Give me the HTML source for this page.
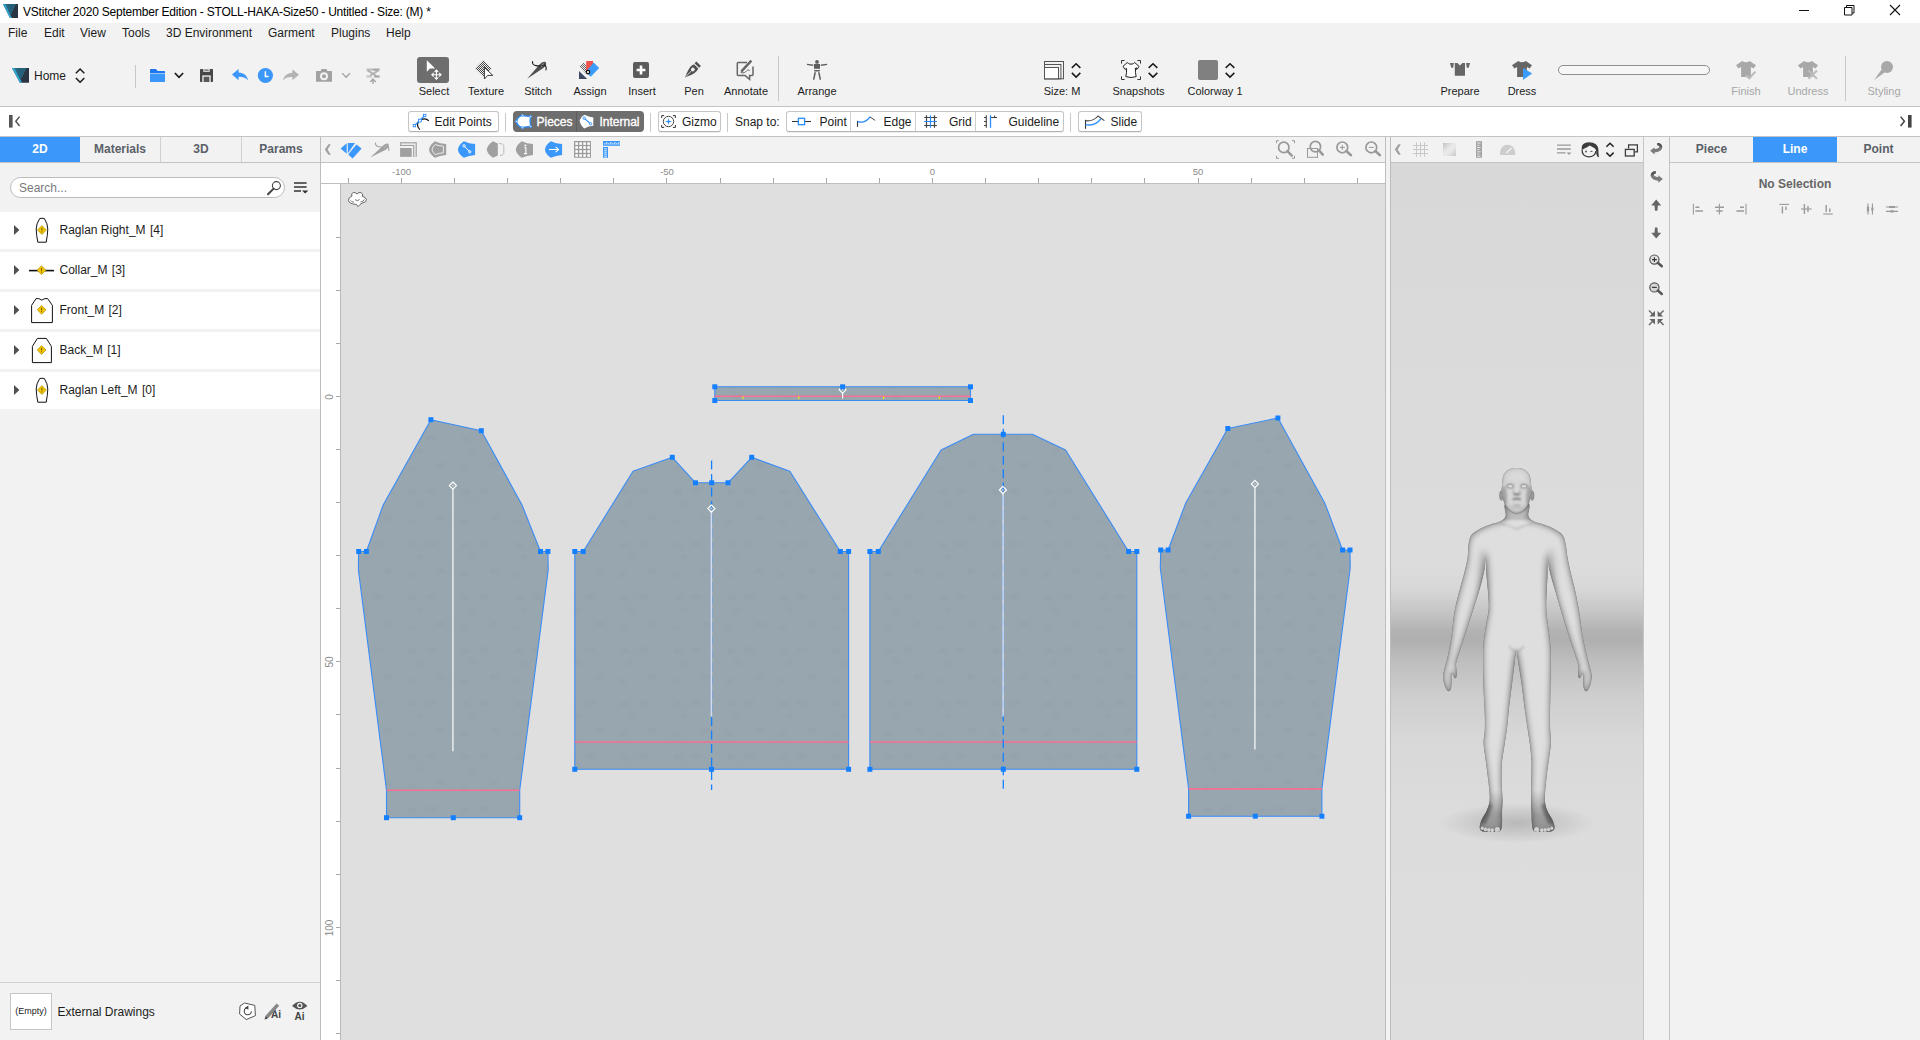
<!DOCTYPE html><html><head><meta charset="utf-8"><title>VStitcher 2020 September Edition</title><style>
html,body{margin:0;padding:0}
body{width:1920px;height:1040px;position:relative;overflow:hidden;background:#f2f2f2;font-family:"Liberation Sans",sans-serif;font-size:12px;color:#1c1c1c}
.a{position:absolute}
.t{position:absolute;white-space:nowrap;line-height:14px}
.c{transform:translateX(-50%)}
.lbl{font-size:11px;line-height:13px}
.dis{color:#a6a6a6}
.tab{position:absolute;top:137px;height:25px;line-height:24px;text-align:center;font-weight:bold;color:#5a6068;font-size:12px;box-sizing:border-box}
.tab.on{background:#3b97f9;color:#fff}
.btn{position:absolute;box-sizing:border-box;border:1px solid #c6c6c6;border-bottom-color:#b4b4b4;border-radius:3px;background:#fff;box-shadow:0 1px 1px rgba(0,0,0,0.08)}
.row{position:absolute;left:0;width:320px;height:37px;background:#fff}
svg{position:absolute;overflow:visible}
</style></head><body>
<div class="a" style="left:0px;top:0px;width:1920px;height:23px;background:#fff;"></div>
<div class="t " style="left:23px;top:5px;color:#000;font-size:12px;letter-spacing:-0.22px">VStitcher 2020 September Edition - STOLL-HAKA-Size50 - Untitled - Size: (M) *</div>
<div class="t " style="left:8px;top:26px;">File</div>
<div class="t " style="left:44px;top:26px;">Edit</div>
<div class="t " style="left:80px;top:26px;">View</div>
<div class="t " style="left:122px;top:26px;">Tools</div>
<div class="t " style="left:166px;top:26px;">3D Environment</div>
<div class="t " style="left:268px;top:26px;">Garment</div>
<div class="t " style="left:331px;top:26px;">Plugins</div>
<div class="t " style="left:386px;top:26px;">Help</div>
<div class="a" style="left:0px;top:106px;width:1920px;height:1px;background:#c4c4c4;"></div>
<div class="a" style="left:0px;top:107px;width:1920px;height:29px;background:#fff;"></div>
<div class="a" style="left:0px;top:136px;width:1920px;height:1px;background:#c4c4c4;"></div>
<div class="a" style="left:0px;top:162px;width:1385px;height:1px;background:#c3c3c3;"></div>
<div class="a" style="left:1391px;top:162px;width:253px;height:1px;background:#c3c3c3;"></div>
<div class="a" style="left:1670px;top:162px;width:250px;height:1px;background:#c3c3c3;"></div>
<div class="t " style="left:34px;top:69px;font-size:12px">Home</div>
<div class="a" style="left:135px;top:65px;width:1px;height:23px;background:#c8c8c8;"></div>
<div class="a" style="left:778px;top:56px;width:1px;height:45px;background:#c8c8c8;"></div>
<div class="a" style="left:1845px;top:56px;width:1px;height:45px;background:#c8c8c8;"></div>
<div class="a" style="left:417px;top:57px;width:32px;height:26px;background:#6e6e6e;border-radius:3px"></div>
<div class="t c lbl" style="left:434px;top:85px;">Select</div>
<div class="t c lbl" style="left:486px;top:85px;">Texture</div>
<div class="t c lbl" style="left:538px;top:85px;">Stitch</div>
<div class="t c lbl" style="left:590px;top:85px;">Assign</div>
<div class="t c lbl" style="left:642px;top:85px;">Insert</div>
<div class="t c lbl" style="left:694px;top:85px;">Pen</div>
<div class="t c lbl" style="left:746px;top:85px;">Annotate</div>
<div class="t c lbl" style="left:817px;top:85px;">Arrange</div>
<div class="t c lbl" style="left:1062px;top:85px;">Size: M</div>
<div class="t c lbl" style="left:1138.5px;top:85px;">Snapshots</div>
<div class="t c lbl" style="left:1215px;top:85px;">Colorway 1</div>
<div class="t c lbl" style="left:1460px;top:85px;">Prepare</div>
<div class="t c lbl" style="left:1522px;top:85px;">Dress</div>
<div class="t c lbl dis" style="left:1746px;top:85px;">Finish</div>
<div class="t c lbl dis" style="left:1808px;top:85px;">Undress</div>
<div class="t c lbl dis" style="left:1884px;top:85px;">Styling</div>
<div class="a" style="left:1198px;top:60px;width:20px;height:20px;background:#808080;border-radius:2px"></div>
<div class="a" style="left:1558px;top:65px;width:150px;height:8px;border:1px solid #8e8e8e;border-radius:5px;background:#f6f6f6"></div>
<div class="btn" style="left:408px;top:111px;width:91px;height:21px"></div>
<div class="t " style="left:434.5px;top:115px;">Edit Points</div>
<div class="a" style="left:505px;top:113px;width:1px;height:19px;background:#c8c8c8;"></div>
<div class="a" style="left:513px;top:111px;width:131px;height:21px;background:#6e6e6e;border-radius:4px"></div>
<div class="a" style="left:576px;top:111px;width:1px;height:21px;background:#5e5e5e;"></div>
<div class="t " style="left:536.5px;top:115px;color:#fff;-webkit-text-stroke:0.35px #fff">Pieces</div>
<div class="t " style="left:599.5px;top:115px;color:#fff;-webkit-text-stroke:0.35px #fff">Internal</div>
<div class="a" style="left:650px;top:113px;width:1px;height:19px;background:#c8c8c8;"></div>
<div class="btn" style="left:658px;top:111px;width:63px;height:21px"></div>
<div class="t " style="left:682px;top:115px;">Gizmo</div>
<div class="a" style="left:727px;top:113px;width:1px;height:19px;background:#c8c8c8;"></div>
<div class="t " style="left:735px;top:115px;">Snap to:</div>
<div class="btn" style="left:786px;top:111px;width:278px;height:21px"></div>
<div class="a" style="left:850px;top:112px;width:1px;height:19px;background:#d0d0d0;"></div>
<div class="a" style="left:915px;top:112px;width:1px;height:19px;background:#d0d0d0;"></div>
<div class="a" style="left:975px;top:112px;width:1px;height:19px;background:#d0d0d0;"></div>
<div class="t " style="left:819.5px;top:115px;">Point</div>
<div class="t " style="left:883.5px;top:115px;">Edge</div>
<div class="t " style="left:949px;top:115px;">Grid</div>
<div class="t " style="left:1008.5px;top:115px;">Guideline</div>
<div class="a" style="left:1070px;top:113px;width:1px;height:19px;background:#c8c8c8;"></div>
<div class="btn" style="left:1078px;top:111px;width:64px;height:21px"></div>
<div class="t " style="left:1110.5px;top:115px;">Slide</div>
<div class="a" style="left:320px;top:137px;width:1px;height:903px;background:#bdbdbd;"></div>
<div class="tab on" style="left:0;width:80px">2D</div>
<div class="tab" style="left:80px;width:81px;border-right:1px solid #d0d0d0">Materials</div>
<div class="tab" style="left:161px;width:81px;border-right:1px solid #d0d0d0">3D</div>
<div class="tab" style="left:242px;width:78px">Params</div>
<div class="a" style="left:10px;top:177px;width:273px;height:19px;border:1px solid #bcbcbc;border-radius:11px;background:#fff"></div>
<div class="t " style="left:19px;top:181px;color:#7a7a7a">Search...</div>
<div class="a" style="left:0px;top:212px;width:320px;height:37px;background:#fff;"></div>
<div class="t " style="left:59.5px;top:223px;">Raglan Right_M<span style="margin-left:1px"> [</span>4]</div>
<div class="a" style="left:0px;top:252px;width:320px;height:37px;background:#fff;"></div>
<div class="t " style="left:59.5px;top:263px;">Collar_M<span style="margin-left:1px"> [</span>3]</div>
<div class="a" style="left:0px;top:292px;width:320px;height:37px;background:#fff;"></div>
<div class="t " style="left:59.5px;top:303px;">Front_M<span style="margin-left:1px"> [</span>2]</div>
<div class="a" style="left:0px;top:332px;width:320px;height:37px;background:#fff;"></div>
<div class="t " style="left:59.5px;top:343px;">Back_M<span style="margin-left:1px"> [</span>1]</div>
<div class="a" style="left:0px;top:372px;width:320px;height:37px;background:#fff;"></div>
<div class="t " style="left:59.5px;top:383px;">Raglan Left_M<span style="margin-left:1px"> [</span>0]</div>
<div class="a" style="left:0px;top:982px;width:320px;height:1px;background:#d2d2d2;"></div>
<div class="a" style="left:10px;top:993px;width:40px;height:35px;border:1px solid #c6c6c6;background:#fff;box-sizing:content-box"></div>
<div class="t c" style="left:31px;top:1006px;font-size:9px;line-height:11px">(Empty)</div>
<div class="t " style="left:57.5px;top:1005px;">External Drawings</div>
<div class="t " style="left:271px;top:1009.5px;font-weight:bold;font-size:10px;line-height:10px;color:#444">Ai</div>
<div class="t " style="left:294.6px;top:1011.5px;font-weight:bold;font-size:10px;line-height:10px;color:#444">Ai</div>
<div class="a" style="left:321px;top:163px;width:1064px;height:20px;background:#fff;"></div>
<div class="a" style="left:321px;top:183px;width:1064px;height:1px;background:#bdbdbd;"></div>
<div class="a" style="left:321px;top:184px;width:19px;height:856px;background:#fff;"></div>
<div class="a" style="left:340px;top:184px;width:1px;height:856px;background:#b8b8b8;"></div>
<div class="a" style="left:341px;top:184px;width:1044px;height:856px;background:#e0dfe0;"></div>
<div class="a" style="left:1385px;top:137px;width:1px;height:903px;background:#bdbdbd;"></div>
<div class="a" style="left:1390px;top:137px;width:1px;height:903px;background:#bdbdbd;"></div>
<div class="a" style="left:348px;top:178px;width:1px;height:5px;background:#a8a8a8;"></div>
<div class="a" style="left:401px;top:178px;width:1px;height:5px;background:#a8a8a8;"></div>
<div class="a" style="left:454px;top:178px;width:1px;height:5px;background:#a8a8a8;"></div>
<div class="a" style="left:507px;top:178px;width:1px;height:5px;background:#a8a8a8;"></div>
<div class="a" style="left:560px;top:178px;width:1px;height:5px;background:#a8a8a8;"></div>
<div class="a" style="left:613px;top:178px;width:1px;height:5px;background:#a8a8a8;"></div>
<div class="a" style="left:666px;top:178px;width:1px;height:5px;background:#a8a8a8;"></div>
<div class="a" style="left:720px;top:178px;width:1px;height:5px;background:#a8a8a8;"></div>
<div class="a" style="left:773px;top:178px;width:1px;height:5px;background:#a8a8a8;"></div>
<div class="a" style="left:826px;top:178px;width:1px;height:5px;background:#a8a8a8;"></div>
<div class="a" style="left:879px;top:178px;width:1px;height:5px;background:#a8a8a8;"></div>
<div class="a" style="left:932px;top:178px;width:1px;height:5px;background:#a8a8a8;"></div>
<div class="a" style="left:985px;top:178px;width:1px;height:5px;background:#a8a8a8;"></div>
<div class="a" style="left:1038px;top:178px;width:1px;height:5px;background:#a8a8a8;"></div>
<div class="a" style="left:1091px;top:178px;width:1px;height:5px;background:#a8a8a8;"></div>
<div class="a" style="left:1144px;top:178px;width:1px;height:5px;background:#a8a8a8;"></div>
<div class="a" style="left:1198px;top:178px;width:1px;height:5px;background:#a8a8a8;"></div>
<div class="a" style="left:1251px;top:178px;width:1px;height:5px;background:#a8a8a8;"></div>
<div class="a" style="left:1304px;top:178px;width:1px;height:5px;background:#a8a8a8;"></div>
<div class="a" style="left:1357px;top:178px;width:1px;height:5px;background:#a8a8a8;"></div>
<div class="a" style="left:336px;top:237px;width:4px;height:1px;background:#a8a8a8;"></div>
<div class="a" style="left:336px;top:290px;width:4px;height:1px;background:#a8a8a8;"></div>
<div class="a" style="left:336px;top:343px;width:4px;height:1px;background:#a8a8a8;"></div>
<div class="a" style="left:336px;top:396px;width:4px;height:1px;background:#a8a8a8;"></div>
<div class="a" style="left:336px;top:449px;width:4px;height:1px;background:#a8a8a8;"></div>
<div class="a" style="left:336px;top:502px;width:4px;height:1px;background:#a8a8a8;"></div>
<div class="a" style="left:336px;top:555px;width:4px;height:1px;background:#a8a8a8;"></div>
<div class="a" style="left:336px;top:608px;width:4px;height:1px;background:#a8a8a8;"></div>
<div class="a" style="left:336px;top:661px;width:4px;height:1px;background:#a8a8a8;"></div>
<div class="a" style="left:336px;top:714px;width:4px;height:1px;background:#a8a8a8;"></div>
<div class="a" style="left:336px;top:768px;width:4px;height:1px;background:#a8a8a8;"></div>
<div class="a" style="left:336px;top:821px;width:4px;height:1px;background:#a8a8a8;"></div>
<div class="a" style="left:336px;top:874px;width:4px;height:1px;background:#a8a8a8;"></div>
<div class="a" style="left:336px;top:927px;width:4px;height:1px;background:#a8a8a8;"></div>
<div class="a" style="left:336px;top:980px;width:4px;height:1px;background:#a8a8a8;"></div>
<div class="a" style="left:336px;top:1033px;width:4px;height:1px;background:#a8a8a8;"></div>
<div class="t c" style="left:401.5px;top:166px;font-size:9.5px;line-height:11px;color:#8a8a8a">-100</div>
<div class="t c" style="left:667px;top:166px;font-size:9.5px;line-height:11px;color:#8a8a8a">-50</div>
<div class="t c" style="left:932.5px;top:166px;font-size:9.5px;line-height:11px;color:#8a8a8a">0</div>
<div class="t c" style="left:1198px;top:166px;font-size:9.5px;line-height:11px;color:#8a8a8a">50</div>
<div class="t" style="left:328.6px;top:396.79999999999995px;font-size:10px;line-height:11px;color:#8a8a8a;transform:translate(-50%,-50%) rotate(-90deg)">0</div>
<div class="t" style="left:328.6px;top:662.3px;font-size:10px;line-height:11px;color:#8a8a8a;transform:translate(-50%,-50%) rotate(-90deg)">50</div>
<div class="t" style="left:328.6px;top:927.8px;font-size:10px;line-height:11px;color:#8a8a8a;transform:translate(-50%,-50%) rotate(-90deg)">100</div>
<div class="a" style="left:1391px;top:163px;width:253px;height:877px;background:linear-gradient(to bottom,#d8d8d8 0px,#dbdbdb 250px,#dcdcdc 400px,#d8d8d8 425px,#c4c4c4 450px,#b2b2b2 468px,#b0b0b0 478px,#bcbcbc 495px,#cdcdcd 530px,#d8d8d8 576px,#dcdcdc 650px,#dedede 877px)"></div>
<div class="a" style="left:1643px;top:137px;width:1px;height:903px;background:#c6c6c6;"></div>
<div class="a" style="left:1669px;top:137px;width:1px;height:903px;background:#c2c2c2;"></div>
<div class="tab" style="left:1670px;width:83px">Piece</div>
<div class="tab on" style="left:1753px;width:84px">Line</div>
<div class="tab" style="left:1837px;width:83px">Point</div>
<div class="t c" style="left:1795px;top:177px;font-weight:bold;color:#666">No Selection</div>
<svg width="1920" height="1040" viewBox="0 0 1920 1040" style="left:0;top:0"><defs><filter id="fbl"><feGaussianBlur stdDeviation="1.5"/></filter><pattern id="fab" width="53" height="53" patternUnits="userSpaceOnUse" x="30" y="5"><rect width="53" height="53" fill="#98a6af"/><g fill="#5c6f7c" opacity="0.06" filter="url(#fbl)"><ellipse cx="12" cy="10" rx="5" ry="3"/><ellipse cx="30" cy="9" rx="6" ry="3"/><ellipse cx="18" cy="22" rx="4" ry="2.5"/><ellipse cx="40" cy="36" rx="5" ry="3"/><ellipse cx="10" cy="40" rx="4" ry="3"/></g></pattern></defs><polygon points="430.9,419.7 481.3,430.7 521.9,504.7 540.5,551.5 547.9,551.5 548.2,570 519.7,790.2 519.7,817.7 386.5,817.7 386.5,790.2 358.4,570 358.6,551.5 366.4,551.5 383.3,504.7" fill="url(#fab)" stroke="#3a8cf6" stroke-width="1.1" stroke-linejoin="round"/>
<polygon points="574.8,551.5 583.2,551.5 633,471.3 672.3,457.3 695.5,482.8 728,482.8 751.7,457.3 789.9,471.3 840.3,551.5 848.6,551.5 848.6,769.3 574.8,769.3" fill="url(#fab)" stroke="#3a8cf6" stroke-width="1.1" stroke-linejoin="round"/>
<polygon points="869.9,551.5 878.3,551.5 941.1,450 973.4,434.3 1032.4,434.3 1065.6,450 1128.6,551.5 1136.8,551.5 1136.8,769.3 869.9,769.3" fill="url(#fab)" stroke="#3a8cf6" stroke-width="1.1" stroke-linejoin="round"/>
<polygon points="1227.8,428.5 1277.9,418 1325,503.6 1342.6,550 1350,550 1350.2,568 1321.9,788.7 1321.9,816.2 1188.6,816.2 1188.6,788.7 1160.3,568 1160.7,550 1168.1,550 1185.5,503.6" fill="url(#fab)" stroke="#3a8cf6" stroke-width="1.1" stroke-linejoin="round"/>
<polygon points="714.8,386.8 970.5,386.8 970.5,400.5 714.8,400.5" fill="url(#fab)" stroke="#3a8cf6" stroke-width="1.1" stroke-linejoin="round"/>
<line x1="386.5" y1="790.2" x2="519.7" y2="790.2" stroke="#f66f90" stroke-width="1.6"/>
<line x1="574.8" y1="742" x2="848.6" y2="742" stroke="#f66f90" stroke-width="1.6"/>
<line x1="869.9" y1="742" x2="1136.8" y2="742" stroke="#f66f90" stroke-width="1.6"/>
<line x1="1188.6" y1="788.9" x2="1321.9" y2="788.9" stroke="#f66f90" stroke-width="1.6"/>
<line x1="714.8" y1="396.3" x2="970.5" y2="396.3" stroke="#f66f90" stroke-width="1.6"/>
<rect x="742.4" y="396.4" width="1.2" height="2.6" fill="#f4e41a"/>
<rect x="798.1999999999999" y="396.4" width="1.2" height="2.6" fill="#f4e41a"/>
<rect x="883.0" y="396.4" width="1.2" height="2.6" fill="#f4e41a"/>
<rect x="938.6999999999999" y="396.4" width="1.2" height="2.6" fill="#f4e41a"/>
<line x1="711.6" y1="460.5" x2="711.6" y2="790" stroke="#1580ff" stroke-width="1.3" stroke-dasharray="9 4.5"/>
<line x1="1003.3" y1="415.3" x2="1003.3" y2="790" stroke="#1580ff" stroke-width="1.3" stroke-dasharray="9 4.5"/>
<line x1="452.9" y1="489" x2="452.9" y2="751.2" stroke="#e9ecee" stroke-width="1.5"/>
<line x1="711.4" y1="512" x2="711.4" y2="716.5" stroke="#cfdcf6" stroke-width="1.5"/>
<line x1="1003.1" y1="493.5" x2="1003.1" y2="716.5" stroke="#cfdcf6" stroke-width="1.5"/>
<line x1="1254.9" y1="487.5" x2="1254.9" y2="749.5" stroke="#e9ecee" stroke-width="1.5"/>
<path d="M452.9,482.0L456.5,485.6L452.9,489.20000000000005L449.29999999999995,485.6Z" fill="none" stroke="#fff" stroke-width="1.1"/><circle cx="452.9" cy="485.6" r="0.8" fill="#d8dde0"/>
<path d="M711.4,505.0L715.0,508.6L711.4,512.2L707.8,508.6Z" fill="none" stroke="#fff" stroke-width="1.1"/><circle cx="711.4" cy="508.6" r="0.8" fill="#d8dde0"/>
<path d="M1002.9,486.4L1006.5,490L1002.9,493.6L999.3,490Z" fill="none" stroke="#fff" stroke-width="1.1"/><circle cx="1002.9" cy="490" r="0.8" fill="#d8dde0"/>
<path d="M1254.9,480.4L1258.5,484L1254.9,487.6L1251.3000000000002,484Z" fill="none" stroke="#fff" stroke-width="1.1"/><circle cx="1254.9" cy="484" r="0.8" fill="#d8dde0"/>
<line x1="842.6" y1="393" x2="842.6" y2="398.6" stroke="#fff" stroke-width="1.2"/>
<path d="M842.6,386.40000000000003L846.0,389.8L842.6,393.2L839.2,389.8Z" fill="none" stroke="#fff" stroke-width="1.1"/><circle cx="842.6" cy="389.8" r="0.8" fill="#d8dde0"/>
<rect x="428.4" y="417.2" width="5" height="5" fill="#1580ff"/>
<rect x="478.8" y="428.2" width="5" height="5" fill="#1580ff"/>
<rect x="538.0" y="549.0" width="5" height="5" fill="#1580ff"/>
<rect x="545.4" y="549.0" width="5" height="5" fill="#1580ff"/>
<rect x="517.2" y="815.2" width="5" height="5" fill="#1580ff"/>
<rect x="450.8" y="815.2" width="5" height="5" fill="#1580ff"/>
<rect x="384.0" y="815.2" width="5" height="5" fill="#1580ff"/>
<rect x="356.2" y="549.0" width="5" height="5" fill="#1580ff"/>
<rect x="363.9" y="549.0" width="5" height="5" fill="#1580ff"/>
<rect x="572.3" y="549.0" width="5" height="5" fill="#1580ff"/>
<rect x="580.7" y="549.0" width="5" height="5" fill="#1580ff"/>
<rect x="669.8" y="454.8" width="5" height="5" fill="#1580ff"/>
<rect x="693.0" y="480.3" width="5" height="5" fill="#1580ff"/>
<rect x="709.2" y="480.3" width="5" height="5" fill="#1580ff"/>
<rect x="725.5" y="480.3" width="5" height="5" fill="#1580ff"/>
<rect x="749.2" y="454.8" width="5" height="5" fill="#1580ff"/>
<rect x="837.8" y="549.0" width="5" height="5" fill="#1580ff"/>
<rect x="846.1" y="549.0" width="5" height="5" fill="#1580ff"/>
<rect x="846.1" y="766.8" width="5" height="5" fill="#1580ff"/>
<rect x="709.0" y="766.8" width="5" height="5" fill="#1580ff"/>
<rect x="572.3" y="766.8" width="5" height="5" fill="#1580ff"/>
<rect x="867.4" y="549.0" width="5" height="5" fill="#1580ff"/>
<rect x="875.8" y="549.0" width="5" height="5" fill="#1580ff"/>
<rect x="1000.8" y="431.8" width="5" height="5" fill="#1580ff"/>
<rect x="1126.1" y="549.0" width="5" height="5" fill="#1580ff"/>
<rect x="1134.3" y="549.0" width="5" height="5" fill="#1580ff"/>
<rect x="1134.3" y="766.8" width="5" height="5" fill="#1580ff"/>
<rect x="1000.8" y="766.8" width="5" height="5" fill="#1580ff"/>
<rect x="867.4" y="766.8" width="5" height="5" fill="#1580ff"/>
<rect x="1225.3" y="426.0" width="5" height="5" fill="#1580ff"/>
<rect x="1275.4" y="415.5" width="5" height="5" fill="#1580ff"/>
<rect x="1340.1" y="547.5" width="5" height="5" fill="#1580ff"/>
<rect x="1347.5" y="547.5" width="5" height="5" fill="#1580ff"/>
<rect x="1319.4" y="813.7" width="5" height="5" fill="#1580ff"/>
<rect x="1252.8" y="813.7" width="5" height="5" fill="#1580ff"/>
<rect x="1186.1" y="813.7" width="5" height="5" fill="#1580ff"/>
<rect x="1158.2" y="547.5" width="5" height="5" fill="#1580ff"/>
<rect x="1165.6" y="547.5" width="5" height="5" fill="#1580ff"/>
<rect x="712.3" y="384.3" width="5" height="5" fill="#1580ff"/>
<rect x="840.1" y="384.3" width="5" height="5" fill="#1580ff"/>
<rect x="968.0" y="384.3" width="5" height="5" fill="#1580ff"/>
<rect x="968.0" y="398.0" width="5" height="5" fill="#1580ff"/>
<rect x="712.3" y="398.0" width="5" height="5" fill="#1580ff"/><defs><clipPath id="avc"><path d="M1506.0,503.0C1502.3,505.2 1506.7,512.9 1505.7,516.0C1504.7,519.1 1502.8,520.0 1500.0,521.5C1497.2,523.0 1492.5,523.7 1489.0,525.0C1485.5,526.3 1481.9,527.8 1479.0,529.5C1476.1,531.2 1473.2,532.6 1471.5,535.0C1469.8,537.4 1469.2,540.2 1468.6,544.0C1467.9,547.8 1468.4,553.0 1467.6,558.0C1466.8,563.0 1465.3,568.7 1464.0,574.0C1462.7,579.3 1461.2,583.7 1459.6,590.0C1458.0,596.3 1455.7,604.3 1454.4,612.0C1453.1,619.7 1452.7,628.5 1451.6,636.0C1450.5,643.5 1448.7,652.0 1447.6,657.0C1446.5,662.0 1445.9,663.0 1445.2,666.0C1444.5,669.0 1443.4,672.2 1443.2,675.0C1443.0,677.8 1443.4,680.6 1444.0,683.0C1444.6,685.4 1445.8,688.2 1446.6,689.6C1447.4,691.0 1448.1,691.3 1448.8,691.2C1449.5,691.1 1450.3,690.5 1450.8,689.0C1451.3,687.5 1451.5,684.3 1451.6,682.0C1451.7,679.7 1451.3,676.4 1451.4,675.0C1451.5,673.6 1451.9,673.0 1452.4,673.4C1452.9,673.8 1453.8,676.8 1454.4,677.6C1455.0,678.4 1455.6,678.6 1456.0,678.0C1456.4,677.4 1456.8,675.8 1456.8,674.0C1456.8,672.2 1456.3,669.0 1456.2,667.0C1456.1,665.0 1455.3,666.2 1456.4,662.0C1457.5,657.8 1460.3,649.7 1462.8,642.0C1465.3,634.3 1468.4,624.7 1471.2,616.0C1474.0,607.3 1477.2,597.7 1479.4,590.0C1481.6,582.3 1483.4,575.5 1484.4,570.0C1485.4,564.5 1485.1,556.2 1485.4,557.0C1485.8,557.8 1485.9,566.8 1486.5,575.0C1487.1,583.2 1488.9,597.7 1488.8,606.0C1488.7,614.3 1486.9,618.5 1486.0,625.0C1485.1,631.5 1483.8,638.3 1483.3,645.0C1482.8,651.7 1483.0,657.5 1483.0,665.0C1483.0,672.5 1483.3,681.7 1483.6,690.0C1483.9,698.3 1484.6,708.2 1484.8,715.0C1485.0,721.8 1485.0,726.5 1484.8,731.0C1484.6,735.5 1483.6,738.0 1483.6,742.0C1483.6,746.0 1484.3,749.5 1485.0,755.0C1485.7,760.5 1486.8,767.8 1487.6,775.0C1488.4,782.2 1489.9,792.2 1489.8,798.0C1489.7,803.8 1488.4,806.3 1487.0,810.0C1485.6,813.7 1482.7,817.0 1481.5,820.0C1480.3,823.0 1479.5,826.1 1479.8,828.0C1480.0,829.9 1481.0,830.8 1483.0,831.5C1485.0,832.2 1489.2,832.1 1492.0,832.0C1494.8,831.9 1498.3,832.3 1500.0,831.0C1501.7,829.7 1501.7,827.2 1502.0,824.0C1502.3,820.8 1501.9,816.0 1502.0,812.0C1502.1,808.0 1502.6,805.3 1502.5,800.0C1502.4,794.7 1501.6,786.3 1501.5,780.0C1501.4,773.7 1501.5,767.8 1502.0,762.0C1502.5,756.2 1503.7,750.7 1504.5,745.0C1505.3,739.3 1506.2,734.2 1507.0,728.0C1507.8,721.8 1508.2,715.3 1509.0,708.0C1509.8,700.7 1511.1,691.3 1512.0,684.0C1512.9,676.7 1513.8,669.4 1514.5,664.0C1515.2,658.6 1515.6,651.5 1516.3,651.5C1517.0,651.5 1517.6,658.6 1518.5,664.0C1519.4,669.4 1520.6,676.7 1521.6,684.0C1522.6,691.3 1523.6,700.7 1524.6,708.0C1525.6,715.3 1526.6,721.8 1527.5,728.0C1528.4,734.2 1529.3,739.3 1530.0,745.0C1530.7,750.7 1531.3,756.2 1531.5,762.0C1531.7,767.8 1531.4,773.7 1531.3,780.0C1531.2,786.3 1531.0,794.7 1531.0,800.0C1531.0,805.3 1531.3,808.0 1531.5,812.0C1531.7,816.0 1531.6,820.8 1532.0,824.0C1532.4,827.2 1532.3,829.7 1534.0,831.0C1535.7,832.3 1539.2,831.9 1542.0,832.0C1544.8,832.1 1548.9,832.2 1551.0,831.5C1553.1,830.8 1554.2,829.9 1554.5,828.0C1554.8,826.1 1553.8,823.0 1552.5,820.0C1551.2,817.0 1548.3,813.7 1547.0,810.0C1545.7,806.3 1544.9,803.8 1544.9,798.0C1544.9,792.2 1546.0,782.2 1546.8,775.0C1547.6,767.8 1548.8,760.5 1549.5,755.0C1550.2,749.5 1550.9,746.0 1551.0,742.0C1551.1,738.0 1550.4,735.5 1550.2,731.0C1550.0,726.5 1550.0,721.8 1550.0,715.0C1550.0,708.2 1550.3,698.3 1550.4,690.0C1550.5,681.7 1550.8,672.5 1550.8,665.0C1550.8,657.5 1550.9,651.7 1550.4,645.0C1549.9,638.3 1548.7,631.5 1548.0,625.0C1547.3,618.5 1546.3,614.3 1546.2,606.0C1546.1,597.7 1547.3,583.2 1547.5,575.0C1547.7,566.8 1547.3,557.8 1547.6,557.0C1547.9,556.2 1548.2,564.5 1549.4,570.0C1550.6,575.5 1552.8,582.3 1555.0,590.0C1557.2,597.7 1560.0,607.3 1562.6,616.0C1565.2,624.7 1568.3,634.3 1570.8,642.0C1573.3,649.7 1576.1,657.8 1577.4,662.0C1578.7,666.2 1578.5,665.0 1578.6,667.0C1578.7,669.0 1578.0,672.2 1578.0,674.0C1578.0,675.8 1578.4,677.4 1578.8,678.0C1579.2,678.6 1579.8,678.4 1580.4,677.6C1581.0,676.8 1581.9,673.8 1582.4,673.4C1582.9,673.0 1583.3,673.6 1583.4,675.0C1583.5,676.4 1583.1,679.7 1583.2,682.0C1583.3,684.3 1583.5,687.5 1584.0,689.0C1584.5,690.5 1585.3,691.1 1586.0,691.2C1586.7,691.3 1587.4,691.0 1588.2,689.6C1589.0,688.2 1590.2,685.4 1590.8,683.0C1591.4,680.6 1591.8,677.8 1591.6,675.0C1591.4,672.2 1590.3,669.0 1589.6,666.0C1588.9,663.0 1588.4,662.0 1587.2,657.0C1586.0,652.0 1583.9,643.5 1582.6,636.0C1581.3,628.5 1580.5,619.7 1579.2,612.0C1577.9,604.3 1576.4,596.3 1575.0,590.0C1573.6,583.7 1572.2,579.3 1571.0,574.0C1569.8,568.7 1568.5,563.0 1567.6,558.0C1566.7,553.0 1566.4,547.8 1565.6,544.0C1564.8,540.2 1564.3,537.4 1562.5,535.0C1560.7,532.6 1557.9,531.2 1555.0,529.5C1552.1,527.8 1548.5,526.3 1545.0,525.0C1541.5,523.7 1536.8,523.0 1534.0,521.5C1531.2,520.0 1529.3,519.1 1528.3,516.0C1527.3,512.9 1531.7,505.2 1528.0,503.0C1524.3,500.8 1509.7,500.8 1506.0,503.0Z"/></clipPath><clipPath id="avh"><path d="M1516.6,468.0C1519.1,468.0 1521.8,468.3 1524.0,469.5C1526.2,470.7 1528.3,472.6 1529.5,475.0C1530.7,477.4 1530.7,481.2 1531.0,484.0C1531.3,486.8 1531.8,489.3 1531.6,492.0C1531.4,494.7 1530.8,497.5 1530.0,500.0C1529.2,502.5 1528.0,505.0 1526.5,507.0C1525.0,509.0 1522.7,511.0 1521.0,512.0C1519.3,513.0 1518.1,513.0 1516.6,513.0C1515.1,513.0 1513.6,513.0 1512.0,512.0C1510.4,511.0 1508.3,509.0 1506.8,507.0C1505.3,505.0 1504.1,502.5 1503.2,500.0C1502.3,497.5 1501.8,494.7 1501.6,492.0C1501.4,489.3 1501.9,486.8 1502.2,484.0C1502.5,481.2 1502.5,477.4 1503.6,475.0C1504.7,472.6 1506.8,470.7 1509.0,469.5C1511.2,468.3 1514.1,468.0 1516.6,468.0Z"/></clipPath><filter id="avb" x="-20%" y="-20%" width="140%" height="140%"><feGaussianBlur stdDeviation="2.7"/></filter><filter id="avb1" x="-20%" y="-20%" width="140%" height="140%"><feGaussianBlur stdDeviation="1.3"/></filter><filter id="avb05" x="-100%" y="-100%" width="300%" height="300%"><feGaussianBlur stdDeviation="0.45"/></filter><filter id="avb0" x="-100%" y="-100%" width="300%" height="300%"><feGaussianBlur stdDeviation="1"/></filter><filter id="avb3" x="-30%" y="-30%" width="160%" height="160%"><feMorphology operator="erode" radius="2"/><feGaussianBlur stdDeviation="2.6"/></filter><filter id="avb3p" x="-30%" y="-30%" width="160%" height="160%"><feGaussianBlur stdDeviation="3.6"/></filter><linearGradient id="ftg" x1="0" y1="0" x2="0" y2="1"><stop offset="0" stop-color="#000" stop-opacity="0"/><stop offset="0.55" stop-color="#000" stop-opacity="0.3"/><stop offset="1" stop-color="#000" stop-opacity="0.36"/></linearGradient><filter id="avb2" x="-20%" y="-20%" width="140%" height="140%"><feGaussianBlur stdDeviation="6"/></filter><radialGradient id="shd" cx="0.5" cy="0.5" r="0.5"><stop offset="0" stop-color="#000" stop-opacity="0.16"/><stop offset="0.6" stop-color="#000" stop-opacity="0.07"/><stop offset="1" stop-color="#000" stop-opacity="0"/></radialGradient></defs>
<ellipse cx="1517" cy="823" rx="78" ry="20" fill="url(#shd)"/>
<path d="M1506.0,503.0C1502.3,505.2 1506.7,512.9 1505.7,516.0C1504.7,519.1 1502.8,520.0 1500.0,521.5C1497.2,523.0 1492.5,523.7 1489.0,525.0C1485.5,526.3 1481.9,527.8 1479.0,529.5C1476.1,531.2 1473.2,532.6 1471.5,535.0C1469.8,537.4 1469.2,540.2 1468.6,544.0C1467.9,547.8 1468.4,553.0 1467.6,558.0C1466.8,563.0 1465.3,568.7 1464.0,574.0C1462.7,579.3 1461.2,583.7 1459.6,590.0C1458.0,596.3 1455.7,604.3 1454.4,612.0C1453.1,619.7 1452.7,628.5 1451.6,636.0C1450.5,643.5 1448.7,652.0 1447.6,657.0C1446.5,662.0 1445.9,663.0 1445.2,666.0C1444.5,669.0 1443.4,672.2 1443.2,675.0C1443.0,677.8 1443.4,680.6 1444.0,683.0C1444.6,685.4 1445.8,688.2 1446.6,689.6C1447.4,691.0 1448.1,691.3 1448.8,691.2C1449.5,691.1 1450.3,690.5 1450.8,689.0C1451.3,687.5 1451.5,684.3 1451.6,682.0C1451.7,679.7 1451.3,676.4 1451.4,675.0C1451.5,673.6 1451.9,673.0 1452.4,673.4C1452.9,673.8 1453.8,676.8 1454.4,677.6C1455.0,678.4 1455.6,678.6 1456.0,678.0C1456.4,677.4 1456.8,675.8 1456.8,674.0C1456.8,672.2 1456.3,669.0 1456.2,667.0C1456.1,665.0 1455.3,666.2 1456.4,662.0C1457.5,657.8 1460.3,649.7 1462.8,642.0C1465.3,634.3 1468.4,624.7 1471.2,616.0C1474.0,607.3 1477.2,597.7 1479.4,590.0C1481.6,582.3 1483.4,575.5 1484.4,570.0C1485.4,564.5 1485.1,556.2 1485.4,557.0C1485.8,557.8 1485.9,566.8 1486.5,575.0C1487.1,583.2 1488.9,597.7 1488.8,606.0C1488.7,614.3 1486.9,618.5 1486.0,625.0C1485.1,631.5 1483.8,638.3 1483.3,645.0C1482.8,651.7 1483.0,657.5 1483.0,665.0C1483.0,672.5 1483.3,681.7 1483.6,690.0C1483.9,698.3 1484.6,708.2 1484.8,715.0C1485.0,721.8 1485.0,726.5 1484.8,731.0C1484.6,735.5 1483.6,738.0 1483.6,742.0C1483.6,746.0 1484.3,749.5 1485.0,755.0C1485.7,760.5 1486.8,767.8 1487.6,775.0C1488.4,782.2 1489.9,792.2 1489.8,798.0C1489.7,803.8 1488.4,806.3 1487.0,810.0C1485.6,813.7 1482.7,817.0 1481.5,820.0C1480.3,823.0 1479.5,826.1 1479.8,828.0C1480.0,829.9 1481.0,830.8 1483.0,831.5C1485.0,832.2 1489.2,832.1 1492.0,832.0C1494.8,831.9 1498.3,832.3 1500.0,831.0C1501.7,829.7 1501.7,827.2 1502.0,824.0C1502.3,820.8 1501.9,816.0 1502.0,812.0C1502.1,808.0 1502.6,805.3 1502.5,800.0C1502.4,794.7 1501.6,786.3 1501.5,780.0C1501.4,773.7 1501.5,767.8 1502.0,762.0C1502.5,756.2 1503.7,750.7 1504.5,745.0C1505.3,739.3 1506.2,734.2 1507.0,728.0C1507.8,721.8 1508.2,715.3 1509.0,708.0C1509.8,700.7 1511.1,691.3 1512.0,684.0C1512.9,676.7 1513.8,669.4 1514.5,664.0C1515.2,658.6 1515.6,651.5 1516.3,651.5C1517.0,651.5 1517.6,658.6 1518.5,664.0C1519.4,669.4 1520.6,676.7 1521.6,684.0C1522.6,691.3 1523.6,700.7 1524.6,708.0C1525.6,715.3 1526.6,721.8 1527.5,728.0C1528.4,734.2 1529.3,739.3 1530.0,745.0C1530.7,750.7 1531.3,756.2 1531.5,762.0C1531.7,767.8 1531.4,773.7 1531.3,780.0C1531.2,786.3 1531.0,794.7 1531.0,800.0C1531.0,805.3 1531.3,808.0 1531.5,812.0C1531.7,816.0 1531.6,820.8 1532.0,824.0C1532.4,827.2 1532.3,829.7 1534.0,831.0C1535.7,832.3 1539.2,831.9 1542.0,832.0C1544.8,832.1 1548.9,832.2 1551.0,831.5C1553.1,830.8 1554.2,829.9 1554.5,828.0C1554.8,826.1 1553.8,823.0 1552.5,820.0C1551.2,817.0 1548.3,813.7 1547.0,810.0C1545.7,806.3 1544.9,803.8 1544.9,798.0C1544.9,792.2 1546.0,782.2 1546.8,775.0C1547.6,767.8 1548.8,760.5 1549.5,755.0C1550.2,749.5 1550.9,746.0 1551.0,742.0C1551.1,738.0 1550.4,735.5 1550.2,731.0C1550.0,726.5 1550.0,721.8 1550.0,715.0C1550.0,708.2 1550.3,698.3 1550.4,690.0C1550.5,681.7 1550.8,672.5 1550.8,665.0C1550.8,657.5 1550.9,651.7 1550.4,645.0C1549.9,638.3 1548.7,631.5 1548.0,625.0C1547.3,618.5 1546.3,614.3 1546.2,606.0C1546.1,597.7 1547.3,583.2 1547.5,575.0C1547.7,566.8 1547.3,557.8 1547.6,557.0C1547.9,556.2 1548.2,564.5 1549.4,570.0C1550.6,575.5 1552.8,582.3 1555.0,590.0C1557.2,597.7 1560.0,607.3 1562.6,616.0C1565.2,624.7 1568.3,634.3 1570.8,642.0C1573.3,649.7 1576.1,657.8 1577.4,662.0C1578.7,666.2 1578.5,665.0 1578.6,667.0C1578.7,669.0 1578.0,672.2 1578.0,674.0C1578.0,675.8 1578.4,677.4 1578.8,678.0C1579.2,678.6 1579.8,678.4 1580.4,677.6C1581.0,676.8 1581.9,673.8 1582.4,673.4C1582.9,673.0 1583.3,673.6 1583.4,675.0C1583.5,676.4 1583.1,679.7 1583.2,682.0C1583.3,684.3 1583.5,687.5 1584.0,689.0C1584.5,690.5 1585.3,691.1 1586.0,691.2C1586.7,691.3 1587.4,691.0 1588.2,689.6C1589.0,688.2 1590.2,685.4 1590.8,683.0C1591.4,680.6 1591.8,677.8 1591.6,675.0C1591.4,672.2 1590.3,669.0 1589.6,666.0C1588.9,663.0 1588.4,662.0 1587.2,657.0C1586.0,652.0 1583.9,643.5 1582.6,636.0C1581.3,628.5 1580.5,619.7 1579.2,612.0C1577.9,604.3 1576.4,596.3 1575.0,590.0C1573.6,583.7 1572.2,579.3 1571.0,574.0C1569.8,568.7 1568.5,563.0 1567.6,558.0C1566.7,553.0 1566.4,547.8 1565.6,544.0C1564.8,540.2 1564.3,537.4 1562.5,535.0C1560.7,532.6 1557.9,531.2 1555.0,529.5C1552.1,527.8 1548.5,526.3 1545.0,525.0C1541.5,523.7 1536.8,523.0 1534.0,521.5C1531.2,520.0 1529.3,519.1 1528.3,516.0C1527.3,512.9 1531.7,505.2 1528.0,503.0C1524.3,500.8 1509.7,500.8 1506.0,503.0Z" fill="#5e5e5e"/>
<g clip-path="url(#avc)"><path d="M1506.0,503.0C1502.3,505.2 1506.7,512.9 1505.7,516.0C1504.7,519.1 1502.8,520.0 1500.0,521.5C1497.2,523.0 1492.5,523.7 1489.0,525.0C1485.5,526.3 1481.9,527.8 1479.0,529.5C1476.1,531.2 1473.2,532.6 1471.5,535.0C1469.8,537.4 1469.2,540.2 1468.6,544.0C1467.9,547.8 1468.4,553.0 1467.6,558.0C1466.8,563.0 1465.3,568.7 1464.0,574.0C1462.7,579.3 1461.2,583.7 1459.6,590.0C1458.0,596.3 1455.7,604.3 1454.4,612.0C1453.1,619.7 1452.7,628.5 1451.6,636.0C1450.5,643.5 1448.7,652.0 1447.6,657.0C1446.5,662.0 1445.9,663.0 1445.2,666.0C1444.5,669.0 1443.4,672.2 1443.2,675.0C1443.0,677.8 1443.4,680.6 1444.0,683.0C1444.6,685.4 1445.8,688.2 1446.6,689.6C1447.4,691.0 1448.1,691.3 1448.8,691.2C1449.5,691.1 1450.3,690.5 1450.8,689.0C1451.3,687.5 1451.5,684.3 1451.6,682.0C1451.7,679.7 1451.3,676.4 1451.4,675.0C1451.5,673.6 1451.9,673.0 1452.4,673.4C1452.9,673.8 1453.8,676.8 1454.4,677.6C1455.0,678.4 1455.6,678.6 1456.0,678.0C1456.4,677.4 1456.8,675.8 1456.8,674.0C1456.8,672.2 1456.3,669.0 1456.2,667.0C1456.1,665.0 1455.3,666.2 1456.4,662.0C1457.5,657.8 1460.3,649.7 1462.8,642.0C1465.3,634.3 1468.4,624.7 1471.2,616.0C1474.0,607.3 1477.2,597.7 1479.4,590.0C1481.6,582.3 1483.4,575.5 1484.4,570.0C1485.4,564.5 1485.1,556.2 1485.4,557.0C1485.8,557.8 1485.9,566.8 1486.5,575.0C1487.1,583.2 1488.9,597.7 1488.8,606.0C1488.7,614.3 1486.9,618.5 1486.0,625.0C1485.1,631.5 1483.8,638.3 1483.3,645.0C1482.8,651.7 1483.0,657.5 1483.0,665.0C1483.0,672.5 1483.3,681.7 1483.6,690.0C1483.9,698.3 1484.6,708.2 1484.8,715.0C1485.0,721.8 1485.0,726.5 1484.8,731.0C1484.6,735.5 1483.6,738.0 1483.6,742.0C1483.6,746.0 1484.3,749.5 1485.0,755.0C1485.7,760.5 1486.8,767.8 1487.6,775.0C1488.4,782.2 1489.9,792.2 1489.8,798.0C1489.7,803.8 1488.4,806.3 1487.0,810.0C1485.6,813.7 1482.7,817.0 1481.5,820.0C1480.3,823.0 1479.5,826.1 1479.8,828.0C1480.0,829.9 1481.0,830.8 1483.0,831.5C1485.0,832.2 1489.2,832.1 1492.0,832.0C1494.8,831.9 1498.3,832.3 1500.0,831.0C1501.7,829.7 1501.7,827.2 1502.0,824.0C1502.3,820.8 1501.9,816.0 1502.0,812.0C1502.1,808.0 1502.6,805.3 1502.5,800.0C1502.4,794.7 1501.6,786.3 1501.5,780.0C1501.4,773.7 1501.5,767.8 1502.0,762.0C1502.5,756.2 1503.7,750.7 1504.5,745.0C1505.3,739.3 1506.2,734.2 1507.0,728.0C1507.8,721.8 1508.2,715.3 1509.0,708.0C1509.8,700.7 1511.1,691.3 1512.0,684.0C1512.9,676.7 1513.8,669.4 1514.5,664.0C1515.2,658.6 1515.6,651.5 1516.3,651.5C1517.0,651.5 1517.6,658.6 1518.5,664.0C1519.4,669.4 1520.6,676.7 1521.6,684.0C1522.6,691.3 1523.6,700.7 1524.6,708.0C1525.6,715.3 1526.6,721.8 1527.5,728.0C1528.4,734.2 1529.3,739.3 1530.0,745.0C1530.7,750.7 1531.3,756.2 1531.5,762.0C1531.7,767.8 1531.4,773.7 1531.3,780.0C1531.2,786.3 1531.0,794.7 1531.0,800.0C1531.0,805.3 1531.3,808.0 1531.5,812.0C1531.7,816.0 1531.6,820.8 1532.0,824.0C1532.4,827.2 1532.3,829.7 1534.0,831.0C1535.7,832.3 1539.2,831.9 1542.0,832.0C1544.8,832.1 1548.9,832.2 1551.0,831.5C1553.1,830.8 1554.2,829.9 1554.5,828.0C1554.8,826.1 1553.8,823.0 1552.5,820.0C1551.2,817.0 1548.3,813.7 1547.0,810.0C1545.7,806.3 1544.9,803.8 1544.9,798.0C1544.9,792.2 1546.0,782.2 1546.8,775.0C1547.6,767.8 1548.8,760.5 1549.5,755.0C1550.2,749.5 1550.9,746.0 1551.0,742.0C1551.1,738.0 1550.4,735.5 1550.2,731.0C1550.0,726.5 1550.0,721.8 1550.0,715.0C1550.0,708.2 1550.3,698.3 1550.4,690.0C1550.5,681.7 1550.8,672.5 1550.8,665.0C1550.8,657.5 1550.9,651.7 1550.4,645.0C1549.9,638.3 1548.7,631.5 1548.0,625.0C1547.3,618.5 1546.3,614.3 1546.2,606.0C1546.1,597.7 1547.3,583.2 1547.5,575.0C1547.7,566.8 1547.3,557.8 1547.6,557.0C1547.9,556.2 1548.2,564.5 1549.4,570.0C1550.6,575.5 1552.8,582.3 1555.0,590.0C1557.2,597.7 1560.0,607.3 1562.6,616.0C1565.2,624.7 1568.3,634.3 1570.8,642.0C1573.3,649.7 1576.1,657.8 1577.4,662.0C1578.7,666.2 1578.5,665.0 1578.6,667.0C1578.7,669.0 1578.0,672.2 1578.0,674.0C1578.0,675.8 1578.4,677.4 1578.8,678.0C1579.2,678.6 1579.8,678.4 1580.4,677.6C1581.0,676.8 1581.9,673.8 1582.4,673.4C1582.9,673.0 1583.3,673.6 1583.4,675.0C1583.5,676.4 1583.1,679.7 1583.2,682.0C1583.3,684.3 1583.5,687.5 1584.0,689.0C1584.5,690.5 1585.3,691.1 1586.0,691.2C1586.7,691.3 1587.4,691.0 1588.2,689.6C1589.0,688.2 1590.2,685.4 1590.8,683.0C1591.4,680.6 1591.8,677.8 1591.6,675.0C1591.4,672.2 1590.3,669.0 1589.6,666.0C1588.9,663.0 1588.4,662.0 1587.2,657.0C1586.0,652.0 1583.9,643.5 1582.6,636.0C1581.3,628.5 1580.5,619.7 1579.2,612.0C1577.9,604.3 1576.4,596.3 1575.0,590.0C1573.6,583.7 1572.2,579.3 1571.0,574.0C1569.8,568.7 1568.5,563.0 1567.6,558.0C1566.7,553.0 1566.4,547.8 1565.6,544.0C1564.8,540.2 1564.3,537.4 1562.5,535.0C1560.7,532.6 1557.9,531.2 1555.0,529.5C1552.1,527.8 1548.5,526.3 1545.0,525.0C1541.5,523.7 1536.8,523.0 1534.0,521.5C1531.2,520.0 1529.3,519.1 1528.3,516.0C1527.3,512.9 1531.7,505.2 1528.0,503.0C1524.3,500.8 1509.7,500.8 1506.0,503.0Z" fill="#a6a6a6" filter="url(#avb1)"/><path d="M1506.0,503.0C1502.3,505.2 1506.7,512.9 1505.7,516.0C1504.7,519.1 1502.8,520.0 1500.0,521.5C1497.2,523.0 1492.5,523.7 1489.0,525.0C1485.5,526.3 1481.9,527.8 1479.0,529.5C1476.1,531.2 1473.2,532.6 1471.5,535.0C1469.8,537.4 1469.2,540.2 1468.6,544.0C1467.9,547.8 1468.4,553.0 1467.6,558.0C1466.8,563.0 1465.3,568.7 1464.0,574.0C1462.7,579.3 1461.2,583.7 1459.6,590.0C1458.0,596.3 1455.7,604.3 1454.4,612.0C1453.1,619.7 1452.7,628.5 1451.6,636.0C1450.5,643.5 1448.7,652.0 1447.6,657.0C1446.5,662.0 1445.9,663.0 1445.2,666.0C1444.5,669.0 1443.4,672.2 1443.2,675.0C1443.0,677.8 1443.4,680.6 1444.0,683.0C1444.6,685.4 1445.8,688.2 1446.6,689.6C1447.4,691.0 1448.1,691.3 1448.8,691.2C1449.5,691.1 1450.3,690.5 1450.8,689.0C1451.3,687.5 1451.5,684.3 1451.6,682.0C1451.7,679.7 1451.3,676.4 1451.4,675.0C1451.5,673.6 1451.9,673.0 1452.4,673.4C1452.9,673.8 1453.8,676.8 1454.4,677.6C1455.0,678.4 1455.6,678.6 1456.0,678.0C1456.4,677.4 1456.8,675.8 1456.8,674.0C1456.8,672.2 1456.3,669.0 1456.2,667.0C1456.1,665.0 1455.3,666.2 1456.4,662.0C1457.5,657.8 1460.3,649.7 1462.8,642.0C1465.3,634.3 1468.4,624.7 1471.2,616.0C1474.0,607.3 1477.2,597.7 1479.4,590.0C1481.6,582.3 1483.4,575.5 1484.4,570.0C1485.4,564.5 1485.1,556.2 1485.4,557.0C1485.8,557.8 1485.9,566.8 1486.5,575.0C1487.1,583.2 1488.9,597.7 1488.8,606.0C1488.7,614.3 1486.9,618.5 1486.0,625.0C1485.1,631.5 1483.8,638.3 1483.3,645.0C1482.8,651.7 1483.0,657.5 1483.0,665.0C1483.0,672.5 1483.3,681.7 1483.6,690.0C1483.9,698.3 1484.6,708.2 1484.8,715.0C1485.0,721.8 1485.0,726.5 1484.8,731.0C1484.6,735.5 1483.6,738.0 1483.6,742.0C1483.6,746.0 1484.3,749.5 1485.0,755.0C1485.7,760.5 1486.8,767.8 1487.6,775.0C1488.4,782.2 1489.9,792.2 1489.8,798.0C1489.7,803.8 1488.4,806.3 1487.0,810.0C1485.6,813.7 1482.7,817.0 1481.5,820.0C1480.3,823.0 1479.5,826.1 1479.8,828.0C1480.0,829.9 1481.0,830.8 1483.0,831.5C1485.0,832.2 1489.2,832.1 1492.0,832.0C1494.8,831.9 1498.3,832.3 1500.0,831.0C1501.7,829.7 1501.7,827.2 1502.0,824.0C1502.3,820.8 1501.9,816.0 1502.0,812.0C1502.1,808.0 1502.6,805.3 1502.5,800.0C1502.4,794.7 1501.6,786.3 1501.5,780.0C1501.4,773.7 1501.5,767.8 1502.0,762.0C1502.5,756.2 1503.7,750.7 1504.5,745.0C1505.3,739.3 1506.2,734.2 1507.0,728.0C1507.8,721.8 1508.2,715.3 1509.0,708.0C1509.8,700.7 1511.1,691.3 1512.0,684.0C1512.9,676.7 1513.8,669.4 1514.5,664.0C1515.2,658.6 1515.6,651.5 1516.3,651.5C1517.0,651.5 1517.6,658.6 1518.5,664.0C1519.4,669.4 1520.6,676.7 1521.6,684.0C1522.6,691.3 1523.6,700.7 1524.6,708.0C1525.6,715.3 1526.6,721.8 1527.5,728.0C1528.4,734.2 1529.3,739.3 1530.0,745.0C1530.7,750.7 1531.3,756.2 1531.5,762.0C1531.7,767.8 1531.4,773.7 1531.3,780.0C1531.2,786.3 1531.0,794.7 1531.0,800.0C1531.0,805.3 1531.3,808.0 1531.5,812.0C1531.7,816.0 1531.6,820.8 1532.0,824.0C1532.4,827.2 1532.3,829.7 1534.0,831.0C1535.7,832.3 1539.2,831.9 1542.0,832.0C1544.8,832.1 1548.9,832.2 1551.0,831.5C1553.1,830.8 1554.2,829.9 1554.5,828.0C1554.8,826.1 1553.8,823.0 1552.5,820.0C1551.2,817.0 1548.3,813.7 1547.0,810.0C1545.7,806.3 1544.9,803.8 1544.9,798.0C1544.9,792.2 1546.0,782.2 1546.8,775.0C1547.6,767.8 1548.8,760.5 1549.5,755.0C1550.2,749.5 1550.9,746.0 1551.0,742.0C1551.1,738.0 1550.4,735.5 1550.2,731.0C1550.0,726.5 1550.0,721.8 1550.0,715.0C1550.0,708.2 1550.3,698.3 1550.4,690.0C1550.5,681.7 1550.8,672.5 1550.8,665.0C1550.8,657.5 1550.9,651.7 1550.4,645.0C1549.9,638.3 1548.7,631.5 1548.0,625.0C1547.3,618.5 1546.3,614.3 1546.2,606.0C1546.1,597.7 1547.3,583.2 1547.5,575.0C1547.7,566.8 1547.3,557.8 1547.6,557.0C1547.9,556.2 1548.2,564.5 1549.4,570.0C1550.6,575.5 1552.8,582.3 1555.0,590.0C1557.2,597.7 1560.0,607.3 1562.6,616.0C1565.2,624.7 1568.3,634.3 1570.8,642.0C1573.3,649.7 1576.1,657.8 1577.4,662.0C1578.7,666.2 1578.5,665.0 1578.6,667.0C1578.7,669.0 1578.0,672.2 1578.0,674.0C1578.0,675.8 1578.4,677.4 1578.8,678.0C1579.2,678.6 1579.8,678.4 1580.4,677.6C1581.0,676.8 1581.9,673.8 1582.4,673.4C1582.9,673.0 1583.3,673.6 1583.4,675.0C1583.5,676.4 1583.1,679.7 1583.2,682.0C1583.3,684.3 1583.5,687.5 1584.0,689.0C1584.5,690.5 1585.3,691.1 1586.0,691.2C1586.7,691.3 1587.4,691.0 1588.2,689.6C1589.0,688.2 1590.2,685.4 1590.8,683.0C1591.4,680.6 1591.8,677.8 1591.6,675.0C1591.4,672.2 1590.3,669.0 1589.6,666.0C1588.9,663.0 1588.4,662.0 1587.2,657.0C1586.0,652.0 1583.9,643.5 1582.6,636.0C1581.3,628.5 1580.5,619.7 1579.2,612.0C1577.9,604.3 1576.4,596.3 1575.0,590.0C1573.6,583.7 1572.2,579.3 1571.0,574.0C1569.8,568.7 1568.5,563.0 1567.6,558.0C1566.7,553.0 1566.4,547.8 1565.6,544.0C1564.8,540.2 1564.3,537.4 1562.5,535.0C1560.7,532.6 1557.9,531.2 1555.0,529.5C1552.1,527.8 1548.5,526.3 1545.0,525.0C1541.5,523.7 1536.8,523.0 1534.0,521.5C1531.2,520.0 1529.3,519.1 1528.3,516.0C1527.3,512.9 1531.7,505.2 1528.0,503.0C1524.3,500.8 1509.7,500.8 1506.0,503.0Z" fill="#dedede" filter="url(#avb3)"/>
<g fill="#000" opacity="0.16" filter="url(#avb3p)"><ellipse cx="1484" cy="575" rx="5" ry="26"/><ellipse cx="1550" cy="575" rx="5" ry="26"/><ellipse cx="1516.5" cy="690" rx="5" ry="36"/></g>
<rect x="1503" y="500" width="28" height="20" fill="#000" opacity="0.15" filter="url(#avb1)"/>
<path d="M1505.4,505 Q1508,511.6 1516.7,513.8 Q1525.6,511.6 1528.2,505 L1528.2,500 L1505.4,500Z" fill="#000" opacity="0.42" filter="url(#avb0)"/>
<path d="M1500,524 Q1510,525 1516.6,529.5 Q1523,525 1533,524" fill="none" stroke="#000" stroke-width="1.6" opacity="0.12" filter="url(#avb1)"/>
<path d="M1509,646 Q1516.5,657 1524,646" fill="none" stroke="#000" stroke-width="2" opacity="0.13" filter="url(#avb1)"/>
<rect x="1470" y="790" width="95" height="46" fill="url(#ftg)"/>
<g fill="#000" opacity="0.22" filter="url(#avb1)"><path d="M1489,802 L1480,823 L1486,824 L1493,806Z"/><path d="M1545,802 L1554,823 L1548,824 L1541,806Z"/></g>
<g fill="#cfcfcf" filter="url(#avb05)"><ellipse cx="1482.2" cy="828.2" rx="1.5" ry="1.72"/><ellipse cx="1485.4" cy="829.4" rx="1.6" ry="1.84"/><ellipse cx="1488.8" cy="830" rx="1.7" ry="1.95"/><ellipse cx="1492.2" cy="830.2" rx="1.8" ry="2.07"/><ellipse cx="1497.4" cy="830" rx="2.5" ry="2.88"/><ellipse cx="1551.8" cy="828.2" rx="1.5" ry="1.72"/><ellipse cx="1548.6" cy="829.4" rx="1.6" ry="1.84"/><ellipse cx="1545.2" cy="830" rx="1.7" ry="1.95"/><ellipse cx="1541.8" cy="830.2" rx="1.8" ry="2.07"/><ellipse cx="1536.6" cy="830" rx="2.5" ry="2.88"/></g>
</g>
<g fill="#9a9a9a" stroke="#7a7a7a" stroke-width="0.6"><ellipse cx="1501.3" cy="495.6" rx="1.7" ry="4.8"/><ellipse cx="1532.3" cy="495.6" rx="1.7" ry="4.8"/></g>
<path d="M1516.6,468.0C1519.1,468.0 1521.8,468.3 1524.0,469.5C1526.2,470.7 1528.3,472.6 1529.5,475.0C1530.7,477.4 1530.7,481.2 1531.0,484.0C1531.3,486.8 1531.8,489.3 1531.6,492.0C1531.4,494.7 1530.8,497.5 1530.0,500.0C1529.2,502.5 1528.0,505.0 1526.5,507.0C1525.0,509.0 1522.7,511.0 1521.0,512.0C1519.3,513.0 1518.1,513.0 1516.6,513.0C1515.1,513.0 1513.6,513.0 1512.0,512.0C1510.4,511.0 1508.3,509.0 1506.8,507.0C1505.3,505.0 1504.1,502.5 1503.2,500.0C1502.3,497.5 1501.8,494.7 1501.6,492.0C1501.4,489.3 1501.9,486.8 1502.2,484.0C1502.5,481.2 1502.5,477.4 1503.6,475.0C1504.7,472.6 1506.8,470.7 1509.0,469.5C1511.2,468.3 1514.1,468.0 1516.6,468.0Z" fill="#666"/>
<g clip-path="url(#avh)"><path d="M1516.6,468.0C1519.1,468.0 1521.8,468.3 1524.0,469.5C1526.2,470.7 1528.3,472.6 1529.5,475.0C1530.7,477.4 1530.7,481.2 1531.0,484.0C1531.3,486.8 1531.8,489.3 1531.6,492.0C1531.4,494.7 1530.8,497.5 1530.0,500.0C1529.2,502.5 1528.0,505.0 1526.5,507.0C1525.0,509.0 1522.7,511.0 1521.0,512.0C1519.3,513.0 1518.1,513.0 1516.6,513.0C1515.1,513.0 1513.6,513.0 1512.0,512.0C1510.4,511.0 1508.3,509.0 1506.8,507.0C1505.3,505.0 1504.1,502.5 1503.2,500.0C1502.3,497.5 1501.8,494.7 1501.6,492.0C1501.4,489.3 1501.9,486.8 1502.2,484.0C1502.5,481.2 1502.5,477.4 1503.6,475.0C1504.7,472.6 1506.8,470.7 1509.0,469.5C1511.2,468.3 1514.1,468.0 1516.6,468.0Z" fill="#a8a8a8" filter="url(#avb0)"/><path d="M1516.6,468.0C1519.1,468.0 1521.8,468.3 1524.0,469.5C1526.2,470.7 1528.3,472.6 1529.5,475.0C1530.7,477.4 1530.7,481.2 1531.0,484.0C1531.3,486.8 1531.8,489.3 1531.6,492.0C1531.4,494.7 1530.8,497.5 1530.0,500.0C1529.2,502.5 1528.0,505.0 1526.5,507.0C1525.0,509.0 1522.7,511.0 1521.0,512.0C1519.3,513.0 1518.1,513.0 1516.6,513.0C1515.1,513.0 1513.6,513.0 1512.0,512.0C1510.4,511.0 1508.3,509.0 1506.8,507.0C1505.3,505.0 1504.1,502.5 1503.2,500.0C1502.3,497.5 1501.8,494.7 1501.6,492.0C1501.4,489.3 1501.9,486.8 1502.2,484.0C1502.5,481.2 1502.5,477.4 1503.6,475.0C1504.7,472.6 1506.8,470.7 1509.0,469.5C1511.2,468.3 1514.1,468.0 1516.6,468.0Z" fill="#d6d6d6" filter="url(#avb)" transform="translate(0,-1)"/>
<g fill="#000" filter="url(#avb1)" opacity="0.2"><ellipse cx="1504.2" cy="496" rx="3" ry="10"/><ellipse cx="1529" cy="496" rx="3" ry="10"/><ellipse cx="1516.6" cy="507" rx="6" ry="1.6" opacity="0.5"/></g>
<g fill="#000" filter="url(#avb0)"><ellipse cx="1510.2" cy="486" rx="3.6" ry="2.3" opacity="0.34"/><ellipse cx="1524" cy="486" rx="3.6" ry="2.3" opacity="0.34"/><ellipse cx="1516.8" cy="494.3" rx="3.6" ry="1.3" opacity="0.42"/><ellipse cx="1516.8" cy="499.2" rx="4.4" ry="1.2" opacity="0.46"/><ellipse cx="1516.8" cy="504.4" rx="3.4" ry="1" opacity="0.18"/><path d="M1513.6,486 L1514.4,493.4 L1512.8,493.6Z M1520,486 L1519.2,493.4 L1520.8,493.6Z" opacity="0.22"/></g>
<g fill="#dcdcdc" filter="url(#avb05)"><ellipse cx="1510.3" cy="486.2" rx="2.3" ry="1.3"/><ellipse cx="1524" cy="486.2" rx="2.3" ry="1.3"/></g>
<g fill="#e0e0e0" filter="url(#avb0)" opacity="0.8"><ellipse cx="1516.8" cy="501.6" rx="3.2" ry="1.3"/><ellipse cx="1516.8" cy="490" rx="1.4" ry="3"/><ellipse cx="1516.8" cy="477" rx="8" ry="4" opacity="0.6"/></g>
</g></svg><svg width="1920" height="1040" viewBox="0 0 1920 1040" style="left:0;top:0"><polygon points="3.00,4.00 18.00,4.00 18.00,18.00 10.00,18.00" fill="#2b3442"/><polygon points="5.00,4.00 15.80,4.00 11.00,14.50" fill="#2a6c86"/><polygon points="7.50,4.00 15.80,4.00 11.00,14.50" fill="#266078"/><polygon points="3.00,4.00 5.20,4.00 12.00,18.00 10.00,18.00" fill="#2fa6cf"/>
<polygon points="12.00,68.00 29.00,68.00 29.00,82.70 19.93,82.70" fill="#2b3442"/><polygon points="14.27,68.00 26.51,68.00 21.07,79.03" fill="#2a6c86"/><polygon points="17.10,68.00 26.51,68.00 21.07,79.03" fill="#266078"/><polygon points="12.00,68.00 14.49,68.00 22.20,82.70 19.93,82.70" fill="#2fa6cf"/>
<path d="M76.4,72.7L80.1,69L83.8,72.7M76.4,78.6L80.1,82.3L83.8,78.6" fill="none" stroke="#1a1a1a" stroke-width="1.5" stroke-linecap="square"/>
<path d="M1799,10.5H1809" stroke="#111" stroke-width="1"/>
<path d="M1844.5,7.5h7.5v7.5h-7.5z M1846.5,7.5v-2h7.5v7.5h-2" fill="none" stroke="#111" stroke-width="1"/>
<path d="M1890,5L1900,15M1900,5L1890,15" stroke="#111" stroke-width="1.1"/>
<path d="M150,69.6 q0,-0.7 0.7,-0.7 h5.2 l1.8,2 h6.6 q0.7,0 0.7,0.7 v1.6 h-15z" fill="#1f76f2"/>
<rect x="150" y="73.8" width="15" height="8.2" rx="0.6" fill="#3b97f9"/>
<path d="M175.4,73.6L179.0,77.4L182.6,73.6" fill="none" stroke="#1a1a1a" stroke-width="1.6" stroke-linecap="square"/>
<path d="M200,69.6 q0,-0.7 0.7,-0.7 h11.6 q0.7,0 0.7,0.7 v11.7 q0,0.7 -0.7,0.7 h-11.6 q-0.7,0 -0.7,-0.7z" fill="#474747"/>
<rect x="203.3" y="68.9" width="6.4" height="2.9" fill="#f2f2f2"/><rect x="204.3" y="69.5" width="4.4" height="1.2" fill="#5a5a5a"/>
<rect x="202.3" y="75.4" width="8.4" height="6.6" fill="#f2f2f2"/><rect x="203.6" y="76.7" width="5.8" height="5.3" fill="#595959"/>
<path d="M232,74.6 L238.6,69 V72.6 C244,72.8 247.4,76 248,80.6 C246,77.6 243,76.6 238.6,76.7 V80.2 Z" fill="#3b97f9"/>
<circle cx="265.4" cy="75.5" r="7.6" fill="#3b97f9"/><path d="M265.4,71.3V76.6H268.6" fill="none" stroke="#fff" stroke-width="1.5"/>
<path d="M299,74.8 L292.4,69.3 V72.8 C287,73 283.6,76.2 283,80.6 C285,77.7 288,76.8 292.4,76.9 V80.3 Z" fill="#b4b4b4"/>
<path d="M316,71.6 q0,-0.7 0.7,-0.7 h4 l0.8,-1.9 h5 l0.8,1.9 h4 q0.7,0 0.7,0.7 v9.5 q0,0.7 -0.7,0.7 h-14.6 q-0.7,0 -0.7,-0.7z" fill="#a2a2a2"/>
<circle cx="324" cy="76.2" r="4" fill="#f2f2f2"/><circle cx="324" cy="76.2" r="2" fill="#a2a2a2"/>
<path d="M342.6,73.6L346.1,77.3L349.6,73.6" fill="none" stroke="#a0a0a0" stroke-width="1.3" stroke-linecap="square"/>
<path d="M366.4,69.6H373" stroke="#bdbdbd" stroke-width="2.2"/><path d="M373,69.6H379.6" stroke="#a6a6a6" stroke-width="2.2"/>
<path d="M367.6,70.4L376,75.7M378.4,70.4L370,75.7" stroke="#b2b2b2" stroke-width="1.9"/>
<path d="M366.4,76.5H371.8" stroke="#c6c6c6" stroke-width="2.2"/><path d="M374.2,76.5H379.6" stroke="#a6a6a6" stroke-width="2.2"/>
<path d="M373,84V79.6M370.2,81.9L373,79.1L375.8,81.9" fill="none" stroke="#a6a6a6" stroke-width="1.4"/>
<path d="M426.8,60.2 L435.2,68.4 H430 L426.8,71.8 Z" fill="#fff"/>
<path d="M436.4,70.6V78.8M432.3,74.7H440.5" stroke="#fff" stroke-width="1.1"/>
<path d="M434.6,72L436.4,70.1L438.2,72M434.6,77.4L436.4,79.3L438.2,77.4M433.7,72.9L431.8,74.7L433.7,76.5M439.1,72.9L441,74.7L439.1,76.5" fill="none" stroke="#fff" stroke-width="1.1"/>
<defs><pattern id="chk" width="2" height="2" patternUnits="userSpaceOnUse"><rect width="1" height="1" fill="#444"/><rect x="1" y="1" width="1" height="1" fill="#444"/></pattern><pattern id="chk2" width="2" height="2" patternUnits="userSpaceOnUse"><rect width="1" height="1" fill="#666"/><rect x="1" y="1" width="1" height="1" fill="#666"/></pattern></defs>
<polygon points="483.4,60 491.8,68.4 483.4,76.8 475,68.4" fill="url(#chk)"/>
<path d="M484.4,67.4 L492.8,75.4 H487.6 L484.4,79 Z" fill="#fff" stroke="#3a3a3a" stroke-width="1"/>
<path d="M527.2,78.8 L539.5,64.5 C541.5,62.3 544.2,61 545.6,62.2 C547,63.6 545.6,66 543.4,68 Z" fill="#505050"/>
<path d="M541.2,66.4 L543.8,63.8" stroke="#f2f2f2" stroke-width="1.1"/>
<path d="M532.6,61.2 C532,63.6 533.4,65.4 536,65.6 C538.4,65.8 541,66.8 542.6,65.4 C544.2,64 545.6,65.4 546,67 C546.3,68.2 546.2,69.4 545.8,70.4" fill="none" stroke="#1a1a1a" stroke-width="1.1"/>
<polygon points="579,71 587.2,79 579,79" fill="#3d4963"/>
<polygon points="579.2,66.6 583.6,62.2 587,65.6 587,72.4 585.6,73.6" fill="url(#chk2)"/>
<polygon points="586.2,61.1 593,61.1 593,65.4 586.2,72.6" fill="#f0524f"/>
<polygon points="593.6,62.6 599.2,68 590.8,76.8 585.8,72.2" fill="#3b9cfb"/>
<circle cx="588" cy="72.1" r="1.7" fill="#fff" stroke="#111" stroke-width="1.3"/>
<rect x="633" y="62" width="16" height="16" rx="2" fill="#5c5c5c"/><path d="M641,65.6V74.4M636.6,70H645.4" stroke="#fff" stroke-width="2.6"/>
<g transform="translate(692.6,69.8) rotate(45)"><path d="M-3.2,-8.6 H3.2 V-6 H-3.2Z" fill="#505050"/><path d="M-3,-5 H3 C4.6,-1.4 3.6,2.4 0,10.8 C-3.6,2.4 -4.6,-1.4 -3,-5Z" fill="#505050"/><circle cx="0" cy="-0.4" r="1.9" fill="#f2f2f2"/><path d="M0,1V10" stroke="#f2f2f2" stroke-width="0.8"/></g>
<path d="M747,62.6 H738.2 Q737.3,62.6 737.3,63.6 V74.4 Q737.3,75.4 738.2,75.4 H745 L749.6,79.4 V75.4 H752 Q753,75.4 753,74.4 V66.5" fill="none" stroke="#666" stroke-width="1.5"/>
<path d="M741.4,71.4 L751.4,60.6" stroke="#666" stroke-width="2.4"/><path d="M740.2,72.8 L741.8,70.2 L742.8,71.6Z" fill="#666"/>
<path d="M741,72.6 C744,73.6 745.6,72 746.6,70.8 C747.6,69.6 749.4,69.6 749.6,71" fill="none" stroke="#666" stroke-width="1"/>
<g fill="#5e5e5e"><circle cx="817" cy="61.9" r="1.9"/><rect x="814" y="64" width="6" height="4.8"/><path d="M806.9,63.8 L813.2,64.5 V65.9 L806.9,64.9Z M827.1,63.8 L820.8,64.5 V65.9 L827.1,64.9Z"/><path d="M814,70 H820 L819.6,71.4 H814.4Z"/><path d="M814.4,72.2 H816 L814.4,79.8 H812.9Z M819.6,72.2 H818 L819.6,79.8 H821.1Z"/></g>
<g fill="none" stroke="#555" stroke-width="1"><rect x="1044.5" y="61.5" width="19" height="17.3"/><rect x="1044.5" y="64.5" width="16.4" height="14.3"/><rect x="1044.5" y="67.5" width="14" height="11.3" fill="#fff"/></g>
<path d="M1072.4,67.4L1076.1,63.8L1079.8,67.4M1072.4,73.4L1076.1,77.1L1079.8,73.4" fill="none" stroke="#1a1a1a" stroke-width="1.5" stroke-linecap="square"/>
<path d="M1121.5,63.6V60.5H1124.6 M1137.4,60.5H1140.5V63.6 M1140.5,76.4V79.5H1137.4 M1124.6,79.5H1121.5V76.4" fill="none" stroke="#333" stroke-width="1"/>
<path d="M1127.2,62.6 Q1131,66 1134.8,62.6 L1139,66.4 L1137,69.4 L1135.4,68.4 Q1135.2,73 1136.2,76.6 Q1131,78.4 1125.8,76.6 Q1126.8,73 1126.6,68.4 L1125,69.4 L1123,66.4 Z" fill="#fff" stroke="#222" stroke-width="1"/>
<path d="M1127.6,62.9 Q1131,66.4 1134.4,62.9 Q1131,63.8 1127.6,62.9Z" fill="#888"/><path d="M1134.5,68.5L1137,67.2L1136.6,69.2Z" fill="#222"/>
<path d="M1149.2,67.4L1153.0,63.8L1156.8,67.4M1149.2,73.4L1153.0,77.1L1156.8,73.4" fill="none" stroke="#1a1a1a" stroke-width="1.5" stroke-linecap="square"/>
<path d="M1226.2,67.4L1230.0,63.8L1233.8,67.4M1226.2,73.4L1230.0,77.1L1233.8,73.4" fill="none" stroke="#1a1a1a" stroke-width="1.5" stroke-linecap="square"/>
<g fill="#666"><polygon points="1454.8,63.1 1457.4,63.1 1459.9,65.6 1462.4,63.1 1465,63.1 1465,75.8 1454.8,75.8"/><polygon points="1450,63.1 1453.8,63.1 1453.2,67.8 1451.3,67.8"/><polygon points="1466.1,63.1 1470,63.1 1468.7,67.8 1466.8,67.8"/></g>
<path d="M1518.2,61 Q1522,63.6 1525.8,61 L1532,65.2 L1529.6,68.6 L1526.9,67 L1526.9,77 L1517.1,77 L1517.1,67 L1514.4,68.6 L1512,65.2 Z" fill="#666"/>
<polygon points="1523,68 1532.2,73.6 1523,79.9" fill="#3b9cfb"/>
<path d="M1742.2,61 Q1746,63.6 1749.8,61 L1756,65.2 L1753.6,68.6 L1750.9,67 L1750.9,77 L1741.1,77 L1741.1,67 L1738.4,68.6 L1736,65.2 Z" fill="#a8a8a8"/>
<path d="M1746,75.4L1749.4,78.2L1755.4,71.6" fill="none" stroke="#bbb" stroke-width="2.1"/>
<path d="M1804.2,61 Q1808,63.6 1811.8,61 L1818,65.2 L1815.6,68.6 L1812.9,67 L1812.9,77 L1803.1,77 L1803.1,67 L1800.4,68.6 L1798,65.2 Z" fill="#a8a8a8"/>
<path d="M1808.4,70.4L1817,78.8M1817,70.4L1808.4,78.8" stroke="#bdbdbd" stroke-width="2.1"/>
<circle cx="1887" cy="66.9" r="6" fill="#a8a8a8"/><path d="M1874.2,79.9 L1881.6,69.6 L1884.6,72.4Z" fill="#a8a8a8"/><rect x="9" y="115" width="3.6" height="12.6" fill="#555"/><path d="M19.6,116.6L15.8,121.3L19.6,126" fill="none" stroke="#555" stroke-width="1.5"/>
<rect x="1908" y="115" width="3.6" height="12.6" fill="#444"/><path d="M1900.6,116.6L1904.4,121.3L1900.6,126" fill="none" stroke="#444" stroke-width="1.5"/>
<path d="M419.8,129.6 C416.6,126.4 416.6,122.4 420.4,120.2 C423.4,118.4 426.8,118.6 428.8,120.8" fill="none" stroke="#111" stroke-width="1.2"/>
<path d="M414.4,125.6L424.7,115.5" stroke="#2a8cff" stroke-width="1.2"/><rect x="413.2" y="124.39999999999999" width="2.4" height="2.4" fill="#fff" stroke="#2a8cff" stroke-width="0.9"/><rect x="423.5" y="114.3" width="2.4" height="2.4" fill="#fff" stroke="#2a8cff" stroke-width="0.9"/><rect x="418.40000000000003" y="119.19999999999999" width="2.8" height="2.8" fill="#fff" stroke="#2a8cff" stroke-width="0.9"/>
<path d="M516.4,121.5 Q517.4,116.6 522.5,115.3 Q526.6,116.6 530.6,116.4 Q529.4,121.5 530.6,126.6 Q526.6,126.4 522.5,127.7 Q517.4,126.4 516.4,121.5Z" fill="#fff" stroke="#2a8cff" stroke-width="1.3"/>
<circle cx="516.4" cy="121.5" r="1" fill="#fff" stroke="#2a8cff" stroke-width="0.8"/>
<circle cx="522.5" cy="115.3" r="1" fill="#fff" stroke="#2a8cff" stroke-width="0.8"/>
<circle cx="530.6" cy="116.4" r="1" fill="#fff" stroke="#2a8cff" stroke-width="0.8"/>
<circle cx="530.6" cy="126.6" r="1" fill="#fff" stroke="#2a8cff" stroke-width="0.8"/>
<circle cx="522.5" cy="127.7" r="1" fill="#fff" stroke="#2a8cff" stroke-width="0.8"/>
<path d="M579.6,120.6 Q580.6,116.8 584.4,114.8 Q588.6,117 593.3,117.4 V125.8 Q588.6,126.2 584.4,128.4 Q580.6,126 579.6,120.6Z" fill="#fff"/>
<path d="M584.4,118.4L590.4,123.6" stroke="#2a8cff" stroke-width="1.2"/><circle cx="584.2" cy="118.2" r="1.2" fill="#fff" stroke="#2a8cff" stroke-width="0.9"/><circle cx="590.6" cy="123.8" r="1.2" fill="#fff" stroke="#2a8cff" stroke-width="0.9"/>
<path d="M661.7,118V115.6H664.2 M672.9,115.6H675.4V118 M675.4,125V127.4H672.9 M664.2,127.4H661.7V125" fill="none" stroke="#333" stroke-width="1"/>
<circle cx="668.5" cy="121.5" r="5.2" fill="none" stroke="#444" stroke-width="1"/>
<path d="M668.5,118 L669.2,120.8 L672,121.5 L669.2,122.2 L668.5,125 L667.8,122.2 L665,121.5 L667.8,120.8Z" fill="#2a8cff"/>
<path d="M792,121.5H811" stroke="#333" stroke-width="1"/><rect x="798.4" y="118.3" width="6.2" height="6.4" fill="#fff" stroke="#2a8cff" stroke-width="1.3"/>
<path d="M857.5,120.8V126.8" stroke="#333" stroke-width="1.1"/><path d="M869.8,116.8L875.2,120.4" stroke="#444" stroke-width="1"/><path d="M857.5,121.6 C863,123.2 867,121 870,116.8" fill="none" stroke="#2a8cff" stroke-width="1.4"/>
<path d="M926.5,115.2V127.8M934.5,115.2V127.8M924.2,117.5H937M924.2,125.5H937" stroke="#444" stroke-width="1.2"/><path d="M930.5,115.2V127.8M924.2,121.5H937" stroke="#2a8cff" stroke-width="1.2"/>
<path d="M986.3,115.2V127.8M984,117.5H986.3M984,121.5H986.3M984,125.5H986.3M990.5,117.5H997M994.6,115.4V117.5" stroke="#444" stroke-width="1.1" fill="none"/><path d="M990.5,115.2V127.8" stroke="#2a8cff" stroke-width="1.3"/>
<path d="M1085.5,119.8V128.8" stroke="#333" stroke-width="1.1"/><path d="M1085.5,120.8 C1091,121.4 1095,119.6 1098,116 L1104.4,120.6" fill="none" stroke="#444" stroke-width="1.1"/><path d="M1085.5,124.6 C1092,126 1097.4,123.6 1101,118.6" fill="none" stroke="#2a8cff" stroke-width="1.4"/><path d="M330.8,144.2H328.4L324.8,149.5L328.4,154.8H330.8L327.6,149.5Z" fill="#a0a0a0"/>
<path d="M1400.8,144.2H1398.4L1394.8,149.5L1398.4,154.8H1400.8L1397.6,149.5Z" fill="#a0a0a0"/>
<polygon points="340.6,148.6 346.7,143.3 346.7,153.8" fill="#3b97f9"/><polygon points="347.8,143 355,143 347.8,153.4" fill="#3b97f9"/><polygon points="356.4,144.4 361.6,148.6 352.6,158.4 348.2,154.6" fill="#3b97f9"/>
<path d="M370.3,157.4 L382.6,146 C384.6,144 387.2,142.9 388.4,144 C389.6,145.2 388.4,147.6 386.2,149.4 Z" fill="#a0a0a0"/><path d="M384.4,147.6L386.8,145.4" stroke="#f2f2f2" stroke-width="1"/>
<path d="M375.6,142.6 C375,144.8 376.4,146.6 379,146.8 C381.4,147 384,148 385.6,146.6 C387.2,145.4 388.4,146.6 388.8,148.2 C389,149.2 389,150.2 388.7,151" fill="none" stroke="#a0a0a0" stroke-width="1.1"/>
<rect x="400.1" y="142.2" width="16.7" height="14.6" fill="#a0a0a0"/><rect x="401.1" y="143.4" width="14.5" height="13.4" fill="#f2f2f2"/><rect x="400.1" y="144.9" width="14.2" height="11.9" fill="#a0a0a0"/><rect x="400.1" y="146" width="13" height="10.8" fill="#f2f2f2"/><rect x="400.1" y="148" width="11.6" height="8.8" fill="#a0a0a0"/>
<path d="M435,141.2 Q440,143.6 446.2,144 V155 Q440,155.4 435,157.8 Q429.4,154 429,149.5 Q429.4,145 435,141.2Z" fill="#a0a0a0"/>
<path d="M435.4,144.6 Q439,146 443.4,146.2 V152.8 Q439,153 435.4,154.6 Q432.4,152.6 432,149.5 Q432.4,146.6 435.4,144.6Z" fill="none" stroke="#f2f2f2" stroke-width="0.9"/>
<path d="M463.9,141.2 Q468.9,143.6 475.09999999999997,144 V155 Q468.9,155.4 463.9,157.8 Q458.29999999999995,154 457.9,149.5 Q458.29999999999995,145 463.9,141.2Z" fill="#3b97f9"/>
<path d="M464.4,146.2L469.4,151.4" stroke="#fff" stroke-width="1"/><circle cx="464" cy="145.8" r="1.2" fill="none" stroke="#fff" stroke-width="0.9"/><circle cx="469.8" cy="151.8" r="1.2" fill="none" stroke="#fff" stroke-width="0.9"/>
<path d="M493,141.2 L497.8,143.4 V155.6 L493,157.8 Q487.2,154 486.8,149.5 Q487.2,145 493,141.2Z" fill="#a0a0a0"/><path d="M499.4,143.6 Q503.6,143.6 503.8,146 V153 Q503.6,155.4 499.4,155.4" fill="none" stroke="#888" stroke-width="1" stroke-dasharray="1 1"/>
<path d="M521.8,141.2 Q526.8,143.6 533.0,144 V155 Q526.8,155.4 521.8,157.8 Q516.1999999999999,154 515.8,149.5 Q516.1999999999999,145 521.8,141.2Z" fill="#a0a0a0"/>
<circle cx="525.4" cy="145.4" r="1" fill="#fff"/><path d="M524.4,147.8H525.9V153.2M524,153.6H527" stroke="#fff" stroke-width="1.1" fill="none"/>
<path d="M550.9,141.2 Q555.9,143.6 562.1,144 V155 Q555.9,155.4 550.9,157.8 Q545.3,154 544.9,149.5 Q545.3,145 550.9,141.2Z" fill="#3b97f9"/>
<path d="M549,149.5H558.4M555.6,146.8L558.6,149.5L555.6,152.2" stroke="#fff" stroke-width="1.1" fill="none"/>
<rect x="574" y="141" width="17" height="16.8" fill="#9c9c9c"/>
<rect x="575.3" y="142.3" width="2.6" height="2.6" fill="#fff"/>
<rect x="575.3" y="146.2" width="2.6" height="2.6" fill="#fff"/>
<rect x="575.3" y="150.2" width="2.6" height="2.6" fill="#fff"/>
<rect x="575.3" y="154.2" width="2.6" height="2.6" fill="#fff"/>
<rect x="579.3" y="142.3" width="2.6" height="2.6" fill="#fff"/>
<rect x="579.3" y="146.2" width="2.6" height="2.6" fill="#fff"/>
<rect x="579.3" y="150.2" width="2.6" height="2.6" fill="#fff"/>
<rect x="579.3" y="154.2" width="2.6" height="2.6" fill="#fff"/>
<rect x="583.3" y="142.3" width="2.6" height="2.6" fill="#fff"/>
<rect x="583.3" y="146.2" width="2.6" height="2.6" fill="#fff"/>
<rect x="583.3" y="150.2" width="2.6" height="2.6" fill="#fff"/>
<rect x="583.3" y="154.2" width="2.6" height="2.6" fill="#fff"/>
<rect x="587.3" y="142.3" width="2.6" height="2.6" fill="#fff"/>
<rect x="587.3" y="146.2" width="2.6" height="2.6" fill="#fff"/>
<rect x="587.3" y="150.2" width="2.6" height="2.6" fill="#fff"/>
<rect x="587.3" y="154.2" width="2.6" height="2.6" fill="#fff"/>
<rect x="603" y="141" width="17" height="4.8" fill="#3b97f9"/><rect x="603" y="147" width="5" height="10.8" fill="#3b97f9"/>
<rect x="604.4" y="143.0" width="0.9" height="1.6" fill="#fff"/>
<rect x="606.4" y="142.0" width="0.9" height="2.6" fill="#fff"/>
<rect x="608.4" y="143.0" width="0.9" height="1.6" fill="#fff"/>
<rect x="610.4" y="142.0" width="0.9" height="2.6" fill="#fff"/>
<rect x="612.4" y="143.0" width="0.9" height="1.6" fill="#fff"/>
<rect x="614.4" y="142.0" width="0.9" height="2.6" fill="#fff"/>
<rect x="616.4" y="143.0" width="0.9" height="1.6" fill="#fff"/>
<rect x="618.4" y="142.0" width="0.9" height="2.6" fill="#fff"/>
<rect x="604.2" y="148.4" width="2.6" height="0.9" fill="#fff"/>
<rect x="604.2" y="150.4" width="2.6" height="0.9" fill="#fff"/>
<rect x="604.2" y="152.4" width="2.6" height="0.9" fill="#fff"/>
<rect x="604.2" y="154.4" width="2.6" height="0.9" fill="#fff"/>
<rect x="604.2" y="156.4" width="2.6" height="0.9" fill="#fff"/>
<path d="M1276.5,143.2V140.7H1279 M1292,140.7H1294.5V143.2 M1294.5,155.8V158.3H1292 M1279,158.3H1276.5V155.8" fill="none" stroke="#999" stroke-width="1"/>
<circle cx="1283.8" cy="147.4" r="5.2" fill="none" stroke="#999" stroke-width="1.7"/><path d="M1287.4,151.1L1291.8,155.6" stroke="#999" stroke-width="2.5" stroke-linecap="round"/>
<circle cx="1315.4" cy="146.6" r="5.2" fill="none" stroke="#999" stroke-width="1.7"/><path d="M1318.9,150.4L1322.8,154.6" stroke="#999" stroke-width="2.5" stroke-linecap="round"/>
<rect x="1307.5" y="148.5" width="10" height="8.8" fill="none" stroke="#999" stroke-width="1"/>
<circle cx="1342.3" cy="147.4" r="5.4" fill="none" stroke="#999" stroke-width="1.7"/><path d="M1346.3,151.0L1351,155.2" stroke="#999" stroke-width="2.5" stroke-linecap="round"/>
<path d="M1339.8,147.4H1344.8M1342.3,144.9V149.9" stroke="#999" stroke-width="1"/>
<circle cx="1371.3" cy="147.4" r="5.4" fill="none" stroke="#999" stroke-width="1.7"/><path d="M1375.3,151.0L1380,155.2" stroke="#999" stroke-width="2.5" stroke-linecap="round"/>
<path d="M1368.8,147.4H1373.8" stroke="#999" stroke-width="1"/>
<path d="M1416.5,142.2V156.8M1420.5,142.2V156.8M1424.5,142.2V156.8M1413,145.5H1428M1413,149.5H1428M1413,153.5H1428" stroke="#c8c8c8" stroke-width="1"/>
<defs><linearGradient id="gsq" x1="0" y1="0" x2="1" y2="1"><stop offset="0" stop-color="#c2c2c2"/><stop offset="0.45" stop-color="#eaeaea"/><stop offset="0.6" stop-color="#e8e8e8"/><stop offset="1" stop-color="#c8c8c8"/></linearGradient></defs><rect x="1443" y="143" width="13" height="13" fill="url(#gsq)"/>
<rect x="1476" y="141.2" width="6" height="16.6" fill="#a4a4a4"/>
<rect x="1477.2" y="142.6" width="3.4" height="0.9" fill="#f2f2f2"/>
<rect x="1477.2" y="144.8" width="2.2" height="0.9" fill="#f2f2f2"/>
<rect x="1477.2" y="147.0" width="3.4" height="0.9" fill="#f2f2f2"/>
<rect x="1477.2" y="149.2" width="2.2" height="0.9" fill="#f2f2f2"/>
<rect x="1477.2" y="151.4" width="3.4" height="0.9" fill="#f2f2f2"/>
<rect x="1477.2" y="153.6" width="2.2" height="0.9" fill="#f2f2f2"/>
<rect x="1477.2" y="155.8" width="3.4" height="0.9" fill="#f2f2f2"/>
<path d="M1500,154.9 V152.4 A7.6,7.6 0 0 1 1515.2,152.4 V154.9Z" fill="#cdcdcd"/><path d="M1506.4,153L1511.6,148" stroke="#f2f2f2" stroke-width="1.5"/>
<path d="M1557,145.2H1570.8M1557,149H1570.8M1557,152.8H1565.6" stroke="#999" stroke-width="1.3"/><path d="M1566.6,152.4H1571.4L1569,155Z" fill="#999"/>
<g><path d="M1582,150 C1580.6,145 1584,142.2 1589,142.2 C1594.6,142.2 1598.6,145 1598.4,150 C1598.2,153 1599,155 1598.8,157.4 C1596.6,156.4 1596,154 1596.2,151 C1595,147 1592,147.4 1589.6,145.6 C1587.6,147.4 1584.6,148.4 1582,150Z" fill="#3c3c3c"/><path d="M1582.2,149.6 C1581.6,154 1584.6,156.8 1588.6,156.8 C1592.4,156.8 1595.4,154.6 1596,151" fill="none" stroke="#3c3c3c" stroke-width="1.3"/><ellipse cx="1586" cy="151.4" rx="0.8" ry="1" fill="#3c3c3c"/><path d="M1590,151.2 Q1591.4,150.4 1592.8,151.2 Q1591.4,152.4 1590,151.2Z" fill="#3c3c3c"/></g>
<path d="M1606.4,146.8L1610,143.2L1613.6,146.8M1606.4,152.6L1610,156.2L1613.6,152.6" fill="none" stroke="#222" stroke-width="1.5"/>
<path d="M1628.6,148.6V144.8H1637.4V151.8H1634.8" fill="none" stroke="#3c3c3c" stroke-width="1.3"/><rect x="1625.4" y="149.4" width="8.8" height="6.6" fill="none" stroke="#3c3c3c" stroke-width="1.3"/><circle cx="276.4" cy="185.6" r="4" fill="none" stroke="#444" stroke-width="1.1"/><path d="M273.6,188.6L268,194.2" stroke="#444" stroke-width="2" stroke-linecap="round"/>
<path d="M294,183H306.6M294,187H306.6M294,191H301" stroke="#333" stroke-width="1.5"/><path d="M302,190.4H308.4L305.2,193.6Z" fill="#333"/>
<path d="M14,225.0L19.4,230.0L14,235.0Z" fill="#505050"/>
<path d="M14,265.0L19.4,270.0L14,275.0Z" fill="#505050"/>
<path d="M14,305.0L19.4,310.0L14,315.0Z" fill="#505050"/>
<path d="M14,345.0L19.4,350.0L14,355.0Z" fill="#505050"/>
<path d="M14,385.0L19.4,390.0L14,395.0Z" fill="#505050"/>
<path d="M39.6,218.6 Q41.9,217.8 44.4,218.6 Q47.8,224 47.8,229 Q47.6,235 46.2,242.2 H37.8 Q36.4,235 36.2,229 Q36.2,224 39.6,218.6Z" fill="#fff" stroke="#111" stroke-width="1"/>
<path d="M41.9,225.6L46.3,230L41.9,234.4L37.5,230Z" fill="#f2c500" stroke="#b08e00" stroke-width="0.7"/><path d="M41.9,227.9V230.5M41.9,231.4V232.3" stroke="#5a4800" stroke-width="0.9"/>
<path d="M39.6,378.6 Q41.9,377.8 44.4,378.6 Q47.8,384 47.8,389 Q47.6,395 46.2,402.2 H37.8 Q36.4,395 36.2,389 Q36.2,384 39.6,378.6Z" fill="#fff" stroke="#111" stroke-width="1"/>
<path d="M41.9,385.6L46.3,390L41.9,394.4L37.5,390Z" fill="#f2c500" stroke="#b08e00" stroke-width="0.7"/><path d="M41.9,387.9V390.5M41.9,391.4V392.3" stroke="#5a4800" stroke-width="0.9"/>
<path d="M29,270.6H54" stroke="#111" stroke-width="1.6"/><path d="M41.5,265.8L45.9,270.2L41.5,274.59999999999997L37.1,270.2Z" fill="#f2c500" stroke="#b08e00" stroke-width="0.7"/><path d="M41.5,268.09999999999997V270.7M41.5,271.59999999999997V272.5" stroke="#5a4800" stroke-width="0.9"/>
<path d="M31.6,322.6 V305.4 L36,298.6 H38.8 Q41.8,301.6 44.8,298.6 H47.6 L52.4,305.4 V322.6Z" fill="#fff" stroke="#111" stroke-width="1"/><path d="M41.6,305.40000000000003L46.0,309.8L41.6,314.2L37.2,309.8Z" fill="#f2c500" stroke="#b08e00" stroke-width="0.7"/><path d="M41.6,307.7V310.3M41.6,311.2V312.1" stroke="#5a4800" stroke-width="0.9"/>
<path d="M32.4,362.6 V346.4 L37.4,338.4 H46.4 L51.4,346.4 V362.6Z" fill="#fff" stroke="#111" stroke-width="1"/><path d="M41.6,345.6L46.0,350L41.6,354.4L37.2,350Z" fill="#f2c500" stroke="#b08e00" stroke-width="0.7"/><path d="M41.6,347.9V350.5M41.6,351.4V352.3" stroke="#5a4800" stroke-width="0.9"/>
<path d="M244.6,1003 L254.8,1005.4 L255.4,1015.6 L246.4,1019.6 L239.6,1014 L240,1006Z" fill="#fff" stroke="#555" stroke-width="1"/><path d="M251.4,1011.4 A3.6,3.6 0 1 1 248,1007.6" fill="none" stroke="#444" stroke-width="1.1"/><path d="M245,1007.8L248.4,1005.6V1009.8Z" fill="#444"/>
<path d="M264.6,1019.4 L265.8,1015.6 L276.6,1003.6 L279.2,1005.8 L268.4,1018Z" fill="#888"/><path d="M264.6,1019.4L265.6,1016.2L267.8,1018.2Z" fill="#444"/>
<path d="M292,1006 Q299.8,997.4 307.4,1006 Q299.8,1013 292,1006Z" fill="#555"/><circle cx="299.8" cy="1005.4" r="2.7" fill="#f2f2f2"/><circle cx="299.8" cy="1005.4" r="1.5" fill="#555"/><path d="M1650.2,150.8 L1654.5,147.2 V149 C1658,148.6 1659.6,147.6 1659.4,146.4 C1659.2,145.6 1658.2,145.2 1657.2,145.2 V143 C1660.6,143 1662.4,145 1662.2,147.6 C1662,150.6 1658.6,152.4 1654.5,152.6 V154.6 Z" fill="#7a7a7a"/><path d="M1657.2,145.2 V143 C1660.6,143 1662.4,145 1662.2,147.6 L1659.4,146.4 C1659.2,145.6 1658.2,145.2 1657.2,145.2Z" fill="#555"/>
<path d="M1662.8,179 L1658.3,175.3 V177.2 C1655,176.8 1653.6,175.8 1653.8,174.6 C1654,173.8 1654.8,173.4 1655.8,173.4 V171.2 C1652.4,171.2 1650.6,173.2 1650.8,175.8 C1651,178.8 1654.4,180.6 1658.3,180.8 V182.8 Z" fill="#7a7a7a"/><path d="M1655.8,173.4 V171.2 C1652.4,171.2 1650.6,173.2 1650.8,175.8 L1653.8,174.6 C1654,173.8 1654.8,173.4 1655.8,173.4Z" fill="#555"/>
<path d="M1656.2,199.6 L1661.2,205.4 H1657.9 L1657.4,210.8 H1655 L1654.5,205.4 H1651.2Z" fill="#666"/>
<path d="M1656.2,238.6 L1661.2,232.8 H1657.9 L1657.4,227.4 H1655 L1654.5,232.8 H1651.2Z" fill="#666"/>
<circle cx="1654.4" cy="259.6" r="4.6" stroke="#555" stroke-width="1.2" fill="#e0e0e0"/><path d="M1657.8,262.7L1661.8,266.2" stroke="#555" stroke-width="2.5" stroke-linecap="round"/>
<path d="M1652,259.6H1656.8M1654.4,257.2V262" stroke="#333" stroke-width="1.1"/>
<circle cx="1654.4" cy="287.4" r="4.6" stroke="#555" stroke-width="1.2" fill="#d4d4d4"/><path d="M1657.8,290.5L1661.8,294" stroke="#555" stroke-width="2.5" stroke-linecap="round"/>
<path d="M1652,287.4H1656.8" stroke="#333" stroke-width="1.1"/>
<path d="M1655,316.4L1649.4,316.4L1655,310.79999999999995Z" fill="#666"/><path d="M1653,314.4L1649,310.4" stroke="#666" stroke-width="1.4"/>
<path d="M1657.6,316.4L1663.1999999999998,316.4L1657.6,310.79999999999995Z" fill="#666"/><path d="M1659.6,314.4L1663.6,310.4" stroke="#666" stroke-width="1.4"/>
<path d="M1655,319L1649.4,319L1655,324.6Z" fill="#666"/><path d="M1653,321L1649,325" stroke="#666" stroke-width="1.4"/>
<path d="M1657.6,319L1663.1999999999998,319L1657.6,324.6Z" fill="#666"/><path d="M1659.6,321L1663.6,325" stroke="#666" stroke-width="1.4"/>
<path d="M1693.4,203.8V214.4" stroke="#9a9a9a" stroke-width="1.1" fill="none"/><path d="M1695.4,207.2H1699.4M1695.4,211H1703" stroke="#9a9a9a" stroke-width="1.4" fill="none"/>
<path d="M1719.4,203.8V214.4" stroke="#9a9a9a" stroke-width="1.1" fill="none"/><path d="M1715,207.2H1724M1716.4,211H1722.6" stroke="#9a9a9a" stroke-width="1.4" fill="none"/>
<path d="M1746,203.8V214.4" stroke="#9a9a9a" stroke-width="1.1" fill="none"/><path d="M1740,207.2H1744M1736.4,211H1744" stroke="#9a9a9a" stroke-width="1.4" fill="none"/>
<path d="M1779.4,204.4H1789" stroke="#9a9a9a" stroke-width="1.1" fill="none"/><path d="M1782.4,206.4V213.4M1786,206.4V210" stroke="#9a9a9a" stroke-width="1.4" fill="none"/>
<path d="M1801,209H1811.6" stroke="#9a9a9a" stroke-width="1.1" fill="none"/><path d="M1804.4,204V214M1808,206V212" stroke="#9a9a9a" stroke-width="1.4" fill="none"/>
<path d="M1823.2,214H1832.8" stroke="#9a9a9a" stroke-width="1.1" fill="none"/><path d="M1826.2,205V212M1829.8,208.4V212" stroke="#9a9a9a" stroke-width="1.4" fill="none"/>
<path d="M1868,203.6V214.6M1872.4,203.6V214.6" stroke="#9a9a9a" stroke-width="1.1" fill="none"/><path d="M1868,206.4V211.6M1872.4,207.4V210.6" stroke="#9a9a9a" stroke-width="2.2" fill="none"/>
<path d="M1886,207H1898M1886,211.4H1898" stroke="#9a9a9a" stroke-width="1.1" fill="none"/><path d="M1889,207H1895M1890.4,211.4H1893.8" stroke="#9a9a9a" stroke-width="2.2" fill="none"/><g><path d="M352,196 Q350.6,193.6 353.2,192.6 Q355.4,192 357,194 Q358.6,192 361,192.6 Q363.6,193.6 362.4,196.4 Q365.4,197 366.4,199.4 Q366.8,202.2 362.4,203 L360,204.4 L358,206.6 L356.4,204.4 Q349.4,204 348.4,200.6 Q348.2,197.6 352,196Z" fill="#fff" stroke="#444" stroke-width="0.8"/><path d="M350.6,200.4 Q351.4,202 354,202.2 M364.4,199.4 Q363.6,201.6 360.6,202 M355,199.6 Q357,201.6 359.6,199.6" fill="none" stroke="#555" stroke-width="0.8"/></g></svg>
</body></html>
